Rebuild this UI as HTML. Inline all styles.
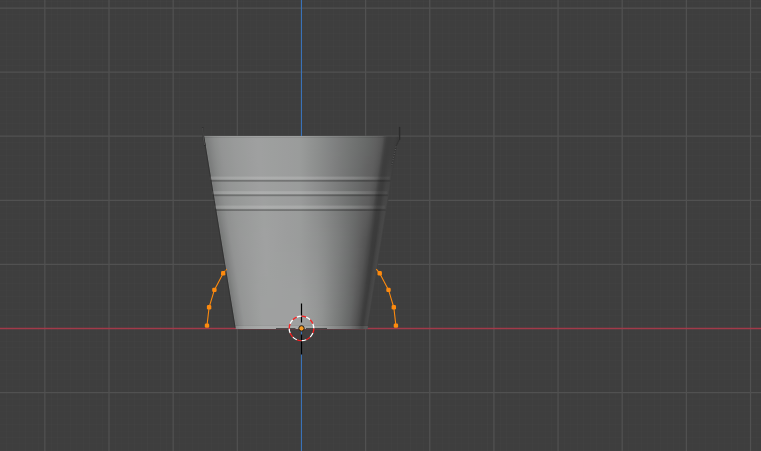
<!DOCTYPE html>
<html><head><meta charset="utf-8"><style>
html,body{margin:0;padding:0;background:#3e3e3e;width:761px;height:451px;overflow:hidden;font-family:"Liberation Sans",sans-serif}
svg{display:block}
</style></head><body>
<svg width="761" height="451" viewBox="0 0 761 451">
<rect width="761" height="451" fill="#3e3e3e"/>

<path d="M0 1.59H761M0 14.41H761M0 20.82H761M-0.05 0V451M0 27.23H761M6.37 0V451M0 33.64H761M12.78 0V451M0 40.05H761M19.20 0V451M0 46.46H761M25.61 0V451M0 52.87H761M32.03 0V451M0 59.28H761M38.44 0V451M0 65.69H761M51.27 0V451M0 78.51H761M57.69 0V451M0 84.92H761M64.10 0V451M0 91.33H761M70.52 0V451M0 97.74H761M76.93 0V451M0 104.15H761M83.35 0V451M0 110.56H761M89.76 0V451M0 116.97H761M96.18 0V451M0 123.38H761M102.59 0V451M0 129.79H761M115.42 0V451M0 142.61H761M121.84 0V451M0 149.02H761M128.25 0V451M0 155.43H761M134.67 0V451M0 161.84H761M141.08 0V451M0 168.25H761M147.50 0V451M0 174.66H761M153.91 0V451M0 181.07H761M160.33 0V451M0 187.48H761M166.74 0V451M0 193.89H761M179.57 0V451M0 206.71H761M185.99 0V451M0 213.12H761M192.40 0V451M0 219.53H761M198.82 0V451M0 225.94H761M205.23 0V451M0 232.35H761M211.65 0V451M0 238.76H761M218.06 0V451M0 245.17H761M224.48 0V451M0 251.58H761M230.89 0V451M0 257.99H761M243.72 0V451M0 270.81H761M250.14 0V451M0 277.22H761M256.55 0V451M0 283.63H761M262.97 0V451M0 290.04H761M269.38 0V451M0 296.45H761M275.80 0V451M0 302.86H761M282.21 0V451M0 309.27H761M288.63 0V451M0 315.68H761M295.04 0V451M0 322.09H761M307.88 0V451M0 334.91H761M314.29 0V451M0 341.32H761M320.70 0V451M0 347.73H761M327.12 0V451M0 354.14H761M333.53 0V451M0 360.55H761M339.95 0V451M0 366.96H761M346.37 0V451M0 373.37H761M352.78 0V451M0 379.78H761M359.19 0V451M0 386.19H761M372.02 0V451M0 399.01H761M378.44 0V451M0 405.42H761M384.86 0V451M0 411.83H761M391.27 0V451M0 418.24H761M397.69 0V451M0 424.65H761M404.10 0V451M0 431.06H761M410.51 0V451M0 437.47H761M416.93 0V451M0 443.88H761M423.35 0V451M0 450.29H761M436.18 0V451M442.59 0V451M449.00 0V451M455.42 0V451M461.84 0V451M468.25 0V451M474.66 0V451M481.08 0V451M487.50 0V451M500.33 0V451M506.74 0V451M513.15 0V451M519.57 0V451M525.99 0V451M532.40 0V451M538.82 0V451M545.23 0V451M551.64 0V451M564.48 0V451M570.89 0V451M577.31 0V451M583.72 0V451M590.13 0V451M596.55 0V451M602.97 0V451M609.38 0V451M615.80 0V451M628.62 0V451M635.04 0V451M641.46 0V451M647.87 0V451M654.29 0V451M660.70 0V451M667.12 0V451M673.53 0V451M679.95 0V451M692.78 0V451M699.19 0V451M705.61 0V451M712.02 0V451M718.44 0V451M724.85 0V451M731.27 0V451M737.68 0V451M744.10 0V451M756.93 0V451" stroke="#ffffff" stroke-opacity="0.015" stroke-width="1" fill="none"/>
<path d="M0 8.00H761M44.86 0V451M0 72.10H761M109.01 0V451M0 136.20H761M173.16 0V451M0 200.30H761M237.31 0V451M0 264.40H761M365.61 0V451M0 392.60H761M429.76 0V451M493.91 0V451M558.06 0V451M622.21 0V451M686.36 0V451M750.51 0V451" stroke="#515151" stroke-width="1.25" fill="none"/>
<path d="M0 328.5H761" stroke="#a23a4a" stroke-width="1.3" fill="none"/>
<path d="M301.46 0V451" stroke="#3a72b8" stroke-width="1.1" fill="none"/>
<defs><linearGradient id="g136"><stop offset="0.010" stop-color="#7c7e7d"/><stop offset="0.020" stop-color="#808282"/><stop offset="0.030" stop-color="#858686"/><stop offset="0.035" stop-color="#878888"/><stop offset="0.050" stop-color="#8c8e8d"/><stop offset="0.055" stop-color="#8d8f8e"/><stop offset="0.060" stop-color="#8e908f"/><stop offset="0.070" stop-color="#919292"/><stop offset="0.076" stop-color="#929493"/><stop offset="0.080" stop-color="#939494"/><stop offset="0.100" stop-color="#959696"/><stop offset="0.120" stop-color="#969897"/><stop offset="0.150" stop-color="#999a9a"/><stop offset="0.200" stop-color="#9b9d9c"/><stop offset="0.210" stop-color="#9c9d9d"/><stop offset="0.270" stop-color="#9fa0a0"/><stop offset="0.280" stop-color="#9fa0a0"/><stop offset="0.350" stop-color="#9d9f9e"/><stop offset="0.420" stop-color="#9c9d9d"/><stop offset="0.490" stop-color="#9a9c9b"/><stop offset="0.550" stop-color="#919392"/><stop offset="0.600" stop-color="#8a8c8b"/><stop offset="0.650" stop-color="#828484"/><stop offset="0.700" stop-color="#7b7c7c"/><stop offset="0.740" stop-color="#757776"/><stop offset="0.790" stop-color="#6e706f"/><stop offset="0.820" stop-color="#6a6c6b"/><stop offset="0.857" stop-color="#646665"/><stop offset="0.886" stop-color="#606060"/><stop offset="0.900" stop-color="#5c5c5c"/><stop offset="0.915" stop-color="#575757"/><stop offset="0.922" stop-color="#525252"/><stop offset="0.925" stop-color="#4e4e4e"/><stop offset="0.927" stop-color="#4b4b4b"/><stop offset="0.930" stop-color="#474747"/><stop offset="0.940" stop-color="#3f3f3f"/><stop offset="0.950" stop-color="#3d3d3d"/><stop offset="0.955" stop-color="#3d3d3d"/><stop offset="0.960" stop-color="#3d3d3d"/><stop offset="0.965" stop-color="#3e3e3e"/><stop offset="0.975" stop-color="#3e3e3e"/><stop offset="0.985" stop-color="#3d3d3d"/><stop offset="0.990" stop-color="#3c3c3c"/><stop offset="1.000" stop-color="#3a3a3a"/></linearGradient><linearGradient id="g140"><stop offset="0.010" stop-color="#7c7e7d"/><stop offset="0.020" stop-color="#808282"/><stop offset="0.030" stop-color="#858686"/><stop offset="0.035" stop-color="#878888"/><stop offset="0.050" stop-color="#8c8e8d"/><stop offset="0.055" stop-color="#8d8f8e"/><stop offset="0.060" stop-color="#8e908f"/><stop offset="0.070" stop-color="#919292"/><stop offset="0.076" stop-color="#929493"/><stop offset="0.080" stop-color="#939494"/><stop offset="0.100" stop-color="#959696"/><stop offset="0.120" stop-color="#969897"/><stop offset="0.150" stop-color="#999a9a"/><stop offset="0.200" stop-color="#9b9d9c"/><stop offset="0.210" stop-color="#9c9d9d"/><stop offset="0.270" stop-color="#9fa0a0"/><stop offset="0.280" stop-color="#9fa0a0"/><stop offset="0.350" stop-color="#9d9f9e"/><stop offset="0.420" stop-color="#9c9d9d"/><stop offset="0.490" stop-color="#9a9c9b"/><stop offset="0.550" stop-color="#919392"/><stop offset="0.600" stop-color="#8a8c8b"/><stop offset="0.650" stop-color="#828484"/><stop offset="0.700" stop-color="#7b7c7c"/><stop offset="0.740" stop-color="#757776"/><stop offset="0.790" stop-color="#6e706f"/><stop offset="0.820" stop-color="#6a6c6b"/><stop offset="0.857" stop-color="#646665"/><stop offset="0.886" stop-color="#606060"/><stop offset="0.900" stop-color="#5c5c5c"/><stop offset="0.915" stop-color="#575757"/><stop offset="0.922" stop-color="#525252"/><stop offset="0.925" stop-color="#4e4e4e"/><stop offset="0.927" stop-color="#4b4b4b"/><stop offset="0.930" stop-color="#474747"/><stop offset="0.940" stop-color="#3f3f3f"/><stop offset="0.950" stop-color="#3d3d3d"/><stop offset="0.955" stop-color="#3d3d3d"/><stop offset="0.960" stop-color="#3d3d3d"/><stop offset="0.965" stop-color="#3e3e3e"/><stop offset="0.975" stop-color="#3e3e3e"/><stop offset="0.985" stop-color="#3d3d3d"/><stop offset="0.990" stop-color="#3c3c3c"/><stop offset="1.000" stop-color="#3a3a3a"/></linearGradient><linearGradient id="g144"><stop offset="0.010" stop-color="#7c7e7d"/><stop offset="0.020" stop-color="#808282"/><stop offset="0.030" stop-color="#858686"/><stop offset="0.035" stop-color="#878888"/><stop offset="0.050" stop-color="#8c8e8d"/><stop offset="0.055" stop-color="#8d8f8e"/><stop offset="0.060" stop-color="#8e908f"/><stop offset="0.070" stop-color="#919292"/><stop offset="0.076" stop-color="#929493"/><stop offset="0.080" stop-color="#939494"/><stop offset="0.100" stop-color="#959696"/><stop offset="0.120" stop-color="#969897"/><stop offset="0.150" stop-color="#999a9a"/><stop offset="0.200" stop-color="#9b9d9c"/><stop offset="0.210" stop-color="#9c9d9d"/><stop offset="0.270" stop-color="#9fa0a0"/><stop offset="0.280" stop-color="#9fa0a0"/><stop offset="0.350" stop-color="#9d9f9e"/><stop offset="0.420" stop-color="#9c9d9d"/><stop offset="0.490" stop-color="#9a9c9b"/><stop offset="0.550" stop-color="#919392"/><stop offset="0.600" stop-color="#8a8c8b"/><stop offset="0.650" stop-color="#828484"/><stop offset="0.700" stop-color="#7b7c7c"/><stop offset="0.740" stop-color="#757776"/><stop offset="0.790" stop-color="#6e706f"/><stop offset="0.820" stop-color="#6a6c6b"/><stop offset="0.857" stop-color="#646665"/><stop offset="0.886" stop-color="#606060"/><stop offset="0.900" stop-color="#5c5c5c"/><stop offset="0.915" stop-color="#575757"/><stop offset="0.922" stop-color="#525252"/><stop offset="0.925" stop-color="#4e4e4e"/><stop offset="0.927" stop-color="#4b4b4b"/><stop offset="0.930" stop-color="#474747"/><stop offset="0.940" stop-color="#3f3f3f"/><stop offset="0.950" stop-color="#3d3d3d"/><stop offset="0.955" stop-color="#3d3d3d"/><stop offset="0.960" stop-color="#3d3d3d"/><stop offset="0.965" stop-color="#3e3e3e"/><stop offset="0.975" stop-color="#3e3e3e"/><stop offset="0.985" stop-color="#3d3d3d"/><stop offset="0.990" stop-color="#3c3c3c"/><stop offset="1.000" stop-color="#3a3a3a"/></linearGradient><linearGradient id="g148"><stop offset="0.010" stop-color="#7c7e7d"/><stop offset="0.020" stop-color="#808282"/><stop offset="0.030" stop-color="#858686"/><stop offset="0.035" stop-color="#878888"/><stop offset="0.050" stop-color="#8c8e8d"/><stop offset="0.055" stop-color="#8d8f8e"/><stop offset="0.060" stop-color="#8e908f"/><stop offset="0.070" stop-color="#919292"/><stop offset="0.076" stop-color="#929493"/><stop offset="0.080" stop-color="#939494"/><stop offset="0.100" stop-color="#959696"/><stop offset="0.120" stop-color="#969897"/><stop offset="0.150" stop-color="#999a9a"/><stop offset="0.200" stop-color="#9b9d9c"/><stop offset="0.210" stop-color="#9c9d9d"/><stop offset="0.270" stop-color="#9fa0a0"/><stop offset="0.280" stop-color="#9fa0a0"/><stop offset="0.350" stop-color="#9d9f9e"/><stop offset="0.420" stop-color="#9c9d9d"/><stop offset="0.490" stop-color="#9a9c9b"/><stop offset="0.550" stop-color="#919392"/><stop offset="0.600" stop-color="#8a8c8b"/><stop offset="0.650" stop-color="#828484"/><stop offset="0.700" stop-color="#7b7c7c"/><stop offset="0.740" stop-color="#757776"/><stop offset="0.790" stop-color="#6e706f"/><stop offset="0.820" stop-color="#6a6c6b"/><stop offset="0.857" stop-color="#646665"/><stop offset="0.886" stop-color="#606060"/><stop offset="0.900" stop-color="#5c5c5c"/><stop offset="0.915" stop-color="#575757"/><stop offset="0.922" stop-color="#525252"/><stop offset="0.925" stop-color="#4e4e4e"/><stop offset="0.927" stop-color="#4b4b4b"/><stop offset="0.930" stop-color="#474747"/><stop offset="0.940" stop-color="#3f3f3f"/><stop offset="0.950" stop-color="#3d3d3d"/><stop offset="0.955" stop-color="#3d3d3d"/><stop offset="0.960" stop-color="#3d3d3d"/><stop offset="0.965" stop-color="#3e3e3e"/><stop offset="0.975" stop-color="#3e3e3e"/><stop offset="0.985" stop-color="#3d3d3d"/><stop offset="0.990" stop-color="#3c3c3c"/><stop offset="1.000" stop-color="#3a3a3a"/></linearGradient><linearGradient id="g152"><stop offset="0.010" stop-color="#7c7e7d"/><stop offset="0.020" stop-color="#818282"/><stop offset="0.030" stop-color="#858786"/><stop offset="0.035" stop-color="#878888"/><stop offset="0.050" stop-color="#8c8e8d"/><stop offset="0.055" stop-color="#8d8f8e"/><stop offset="0.060" stop-color="#8e908f"/><stop offset="0.070" stop-color="#919292"/><stop offset="0.076" stop-color="#929493"/><stop offset="0.080" stop-color="#939494"/><stop offset="0.100" stop-color="#959696"/><stop offset="0.120" stop-color="#969897"/><stop offset="0.150" stop-color="#999a9a"/><stop offset="0.200" stop-color="#9b9d9c"/><stop offset="0.210" stop-color="#9c9d9d"/><stop offset="0.270" stop-color="#9fa0a0"/><stop offset="0.280" stop-color="#9fa0a0"/><stop offset="0.350" stop-color="#9d9f9e"/><stop offset="0.420" stop-color="#9c9d9d"/><stop offset="0.490" stop-color="#9a9c9b"/><stop offset="0.550" stop-color="#919392"/><stop offset="0.600" stop-color="#8a8c8b"/><stop offset="0.650" stop-color="#838484"/><stop offset="0.700" stop-color="#7b7d7c"/><stop offset="0.740" stop-color="#757776"/><stop offset="0.790" stop-color="#6e706f"/><stop offset="0.820" stop-color="#6a6b6b"/><stop offset="0.857" stop-color="#646665"/><stop offset="0.886" stop-color="#606060"/><stop offset="0.900" stop-color="#5c5c5c"/><stop offset="0.915" stop-color="#565656"/><stop offset="0.922" stop-color="#515151"/><stop offset="0.925" stop-color="#4d4d4d"/><stop offset="0.927" stop-color="#4b4b4b"/><stop offset="0.930" stop-color="#474747"/><stop offset="0.940" stop-color="#3f3f3f"/><stop offset="0.950" stop-color="#3d3d3d"/><stop offset="0.955" stop-color="#3d3d3d"/><stop offset="0.960" stop-color="#3d3d3d"/><stop offset="0.965" stop-color="#3e3e3e"/><stop offset="0.975" stop-color="#3e3e3e"/><stop offset="0.985" stop-color="#3e3e3e"/><stop offset="0.990" stop-color="#3d3d3d"/><stop offset="1.000" stop-color="#3a3a3a"/></linearGradient><linearGradient id="g156"><stop offset="0.010" stop-color="#7c7e7d"/><stop offset="0.020" stop-color="#818282"/><stop offset="0.030" stop-color="#858786"/><stop offset="0.035" stop-color="#878888"/><stop offset="0.050" stop-color="#8c8e8d"/><stop offset="0.055" stop-color="#8d8f8e"/><stop offset="0.060" stop-color="#8e908f"/><stop offset="0.070" stop-color="#919292"/><stop offset="0.076" stop-color="#929393"/><stop offset="0.080" stop-color="#939494"/><stop offset="0.100" stop-color="#959696"/><stop offset="0.120" stop-color="#969897"/><stop offset="0.150" stop-color="#999a9a"/><stop offset="0.200" stop-color="#9b9d9c"/><stop offset="0.210" stop-color="#9c9d9d"/><stop offset="0.270" stop-color="#9fa0a0"/><stop offset="0.280" stop-color="#9fa0a0"/><stop offset="0.350" stop-color="#9d9f9e"/><stop offset="0.420" stop-color="#9c9d9d"/><stop offset="0.490" stop-color="#9a9c9b"/><stop offset="0.550" stop-color="#919392"/><stop offset="0.600" stop-color="#8a8c8b"/><stop offset="0.650" stop-color="#838484"/><stop offset="0.700" stop-color="#7b7c7c"/><stop offset="0.740" stop-color="#757776"/><stop offset="0.790" stop-color="#6e6f6f"/><stop offset="0.820" stop-color="#6a6b6b"/><stop offset="0.857" stop-color="#646464"/><stop offset="0.886" stop-color="#606060"/><stop offset="0.900" stop-color="#5c5c5c"/><stop offset="0.915" stop-color="#565656"/><stop offset="0.922" stop-color="#515151"/><stop offset="0.925" stop-color="#4d4d4d"/><stop offset="0.927" stop-color="#4a4a4a"/><stop offset="0.930" stop-color="#464646"/><stop offset="0.940" stop-color="#3f3f3f"/><stop offset="0.950" stop-color="#3d3d3d"/><stop offset="0.955" stop-color="#3d3d3d"/><stop offset="0.960" stop-color="#3e3e3e"/><stop offset="0.965" stop-color="#3e3e3e"/><stop offset="0.975" stop-color="#3f3f3f"/><stop offset="0.985" stop-color="#3f3f3f"/><stop offset="0.990" stop-color="#3e3e3e"/><stop offset="1.000" stop-color="#3b3b3b"/></linearGradient><linearGradient id="g160"><stop offset="0.010" stop-color="#7c7e7d"/><stop offset="0.020" stop-color="#818282"/><stop offset="0.030" stop-color="#858786"/><stop offset="0.035" stop-color="#878888"/><stop offset="0.050" stop-color="#8c8e8d"/><stop offset="0.055" stop-color="#8d8f8e"/><stop offset="0.060" stop-color="#8e908f"/><stop offset="0.070" stop-color="#919292"/><stop offset="0.076" stop-color="#929393"/><stop offset="0.080" stop-color="#939494"/><stop offset="0.100" stop-color="#959696"/><stop offset="0.120" stop-color="#969897"/><stop offset="0.150" stop-color="#999a9a"/><stop offset="0.200" stop-color="#9b9d9c"/><stop offset="0.210" stop-color="#9c9d9d"/><stop offset="0.270" stop-color="#9fa0a0"/><stop offset="0.280" stop-color="#9fa0a0"/><stop offset="0.350" stop-color="#9d9f9e"/><stop offset="0.420" stop-color="#9c9d9d"/><stop offset="0.490" stop-color="#9a9c9b"/><stop offset="0.550" stop-color="#919392"/><stop offset="0.600" stop-color="#8a8c8b"/><stop offset="0.650" stop-color="#838484"/><stop offset="0.700" stop-color="#7b7c7c"/><stop offset="0.740" stop-color="#757776"/><stop offset="0.790" stop-color="#6e6f6f"/><stop offset="0.820" stop-color="#696b6a"/><stop offset="0.857" stop-color="#646464"/><stop offset="0.886" stop-color="#5f5f5f"/><stop offset="0.900" stop-color="#5b5b5b"/><stop offset="0.915" stop-color="#555555"/><stop offset="0.922" stop-color="#505050"/><stop offset="0.925" stop-color="#4c4c4c"/><stop offset="0.927" stop-color="#494949"/><stop offset="0.930" stop-color="#464646"/><stop offset="0.940" stop-color="#3e3e3e"/><stop offset="0.950" stop-color="#3d3d3d"/><stop offset="0.955" stop-color="#3d3d3d"/><stop offset="0.960" stop-color="#3e3e3e"/><stop offset="0.965" stop-color="#3e3e3e"/><stop offset="0.975" stop-color="#404040"/><stop offset="0.985" stop-color="#3f3f3f"/><stop offset="0.990" stop-color="#3f3f3f"/><stop offset="1.000" stop-color="#3b3b3b"/></linearGradient><linearGradient id="g164"><stop offset="0.010" stop-color="#7c7e7d"/><stop offset="0.020" stop-color="#818282"/><stop offset="0.030" stop-color="#858786"/><stop offset="0.035" stop-color="#878988"/><stop offset="0.050" stop-color="#8c8e8d"/><stop offset="0.055" stop-color="#8d8f8e"/><stop offset="0.060" stop-color="#8e908f"/><stop offset="0.070" stop-color="#919292"/><stop offset="0.076" stop-color="#929393"/><stop offset="0.080" stop-color="#939494"/><stop offset="0.100" stop-color="#959696"/><stop offset="0.120" stop-color="#969897"/><stop offset="0.150" stop-color="#999a9a"/><stop offset="0.200" stop-color="#9b9d9c"/><stop offset="0.210" stop-color="#9c9d9d"/><stop offset="0.270" stop-color="#9fa0a0"/><stop offset="0.280" stop-color="#9fa0a0"/><stop offset="0.350" stop-color="#9d9f9e"/><stop offset="0.420" stop-color="#9c9d9d"/><stop offset="0.490" stop-color="#9a9c9b"/><stop offset="0.550" stop-color="#919392"/><stop offset="0.600" stop-color="#8a8c8b"/><stop offset="0.650" stop-color="#838484"/><stop offset="0.700" stop-color="#7b7c7c"/><stop offset="0.740" stop-color="#757776"/><stop offset="0.790" stop-color="#6e6f6f"/><stop offset="0.820" stop-color="#696b6a"/><stop offset="0.857" stop-color="#636363"/><stop offset="0.886" stop-color="#5f5f5f"/><stop offset="0.900" stop-color="#5b5b5b"/><stop offset="0.915" stop-color="#555555"/><stop offset="0.922" stop-color="#4f4f4f"/><stop offset="0.925" stop-color="#4b4b4b"/><stop offset="0.927" stop-color="#494949"/><stop offset="0.930" stop-color="#454545"/><stop offset="0.940" stop-color="#3e3e3e"/><stop offset="0.950" stop-color="#3d3d3d"/><stop offset="0.955" stop-color="#3d3d3d"/><stop offset="0.960" stop-color="#3e3e3e"/><stop offset="0.965" stop-color="#3f3f3f"/><stop offset="0.975" stop-color="#404040"/><stop offset="0.985" stop-color="#404040"/><stop offset="0.990" stop-color="#404040"/><stop offset="1.000" stop-color="#3b3b3b"/></linearGradient><linearGradient id="g168"><stop offset="0.010" stop-color="#7c7e7d"/><stop offset="0.020" stop-color="#818282"/><stop offset="0.030" stop-color="#858786"/><stop offset="0.035" stop-color="#878988"/><stop offset="0.050" stop-color="#8c8e8d"/><stop offset="0.055" stop-color="#8e8f8e"/><stop offset="0.060" stop-color="#8f9090"/><stop offset="0.070" stop-color="#919292"/><stop offset="0.076" stop-color="#929393"/><stop offset="0.080" stop-color="#939494"/><stop offset="0.100" stop-color="#959696"/><stop offset="0.120" stop-color="#969897"/><stop offset="0.150" stop-color="#999a9a"/><stop offset="0.200" stop-color="#9b9d9c"/><stop offset="0.210" stop-color="#9c9d9d"/><stop offset="0.270" stop-color="#9fa0a0"/><stop offset="0.280" stop-color="#9fa0a0"/><stop offset="0.350" stop-color="#9d9f9e"/><stop offset="0.420" stop-color="#9c9d9d"/><stop offset="0.490" stop-color="#9a9c9b"/><stop offset="0.550" stop-color="#919392"/><stop offset="0.600" stop-color="#8a8c8b"/><stop offset="0.650" stop-color="#838484"/><stop offset="0.700" stop-color="#7b7c7c"/><stop offset="0.740" stop-color="#757676"/><stop offset="0.790" stop-color="#6d6f6e"/><stop offset="0.820" stop-color="#696a6a"/><stop offset="0.857" stop-color="#636363"/><stop offset="0.886" stop-color="#5f5f5f"/><stop offset="0.900" stop-color="#5b5b5b"/><stop offset="0.915" stop-color="#545454"/><stop offset="0.922" stop-color="#4f4f4f"/><stop offset="0.925" stop-color="#4b4b4b"/><stop offset="0.927" stop-color="#484848"/><stop offset="0.930" stop-color="#454545"/><stop offset="0.940" stop-color="#3e3e3e"/><stop offset="0.950" stop-color="#3d3d3d"/><stop offset="0.955" stop-color="#3d3d3d"/><stop offset="0.960" stop-color="#3e3e3e"/><stop offset="0.965" stop-color="#3f3f3f"/><stop offset="0.975" stop-color="#414141"/><stop offset="0.985" stop-color="#414141"/><stop offset="0.990" stop-color="#414141"/><stop offset="1.000" stop-color="#3c3c3c"/></linearGradient><linearGradient id="g172"><stop offset="0.010" stop-color="#7c7e7d"/><stop offset="0.020" stop-color="#818282"/><stop offset="0.030" stop-color="#858786"/><stop offset="0.035" stop-color="#878988"/><stop offset="0.050" stop-color="#8c8e8d"/><stop offset="0.055" stop-color="#8e8f8f"/><stop offset="0.060" stop-color="#8f9090"/><stop offset="0.070" stop-color="#919292"/><stop offset="0.076" stop-color="#929393"/><stop offset="0.080" stop-color="#929493"/><stop offset="0.100" stop-color="#959696"/><stop offset="0.120" stop-color="#969897"/><stop offset="0.150" stop-color="#999a9a"/><stop offset="0.200" stop-color="#9b9d9c"/><stop offset="0.210" stop-color="#9c9d9d"/><stop offset="0.270" stop-color="#9fa0a0"/><stop offset="0.280" stop-color="#9fa0a0"/><stop offset="0.350" stop-color="#9d9f9e"/><stop offset="0.420" stop-color="#9c9d9d"/><stop offset="0.490" stop-color="#9a9c9b"/><stop offset="0.550" stop-color="#929393"/><stop offset="0.600" stop-color="#8a8c8b"/><stop offset="0.650" stop-color="#838484"/><stop offset="0.700" stop-color="#7b7c7c"/><stop offset="0.740" stop-color="#757676"/><stop offset="0.790" stop-color="#6d6f6e"/><stop offset="0.820" stop-color="#696a6a"/><stop offset="0.857" stop-color="#636363"/><stop offset="0.886" stop-color="#5f5f5f"/><stop offset="0.900" stop-color="#5a5a5a"/><stop offset="0.915" stop-color="#545454"/><stop offset="0.922" stop-color="#4e4e4e"/><stop offset="0.925" stop-color="#4a4a4a"/><stop offset="0.927" stop-color="#484848"/><stop offset="0.930" stop-color="#454545"/><stop offset="0.940" stop-color="#3e3e3e"/><stop offset="0.950" stop-color="#3d3d3d"/><stop offset="0.955" stop-color="#3d3d3d"/><stop offset="0.960" stop-color="#3e3e3e"/><stop offset="0.965" stop-color="#3f3f3f"/><stop offset="0.975" stop-color="#424242"/><stop offset="0.985" stop-color="#424242"/><stop offset="0.990" stop-color="#424242"/><stop offset="1.000" stop-color="#3c3c3c"/></linearGradient><linearGradient id="g176"><stop offset="0.010" stop-color="#7d7e7e"/><stop offset="0.020" stop-color="#818382"/><stop offset="0.030" stop-color="#868787"/><stop offset="0.035" stop-color="#878988"/><stop offset="0.050" stop-color="#8c8e8d"/><stop offset="0.055" stop-color="#8e8f8f"/><stop offset="0.060" stop-color="#8f9090"/><stop offset="0.070" stop-color="#909291"/><stop offset="0.076" stop-color="#929393"/><stop offset="0.080" stop-color="#929493"/><stop offset="0.100" stop-color="#959696"/><stop offset="0.120" stop-color="#969897"/><stop offset="0.150" stop-color="#989a99"/><stop offset="0.200" stop-color="#9b9d9c"/><stop offset="0.210" stop-color="#9c9d9d"/><stop offset="0.270" stop-color="#9fa0a0"/><stop offset="0.280" stop-color="#9fa0a0"/><stop offset="0.350" stop-color="#9d9f9e"/><stop offset="0.420" stop-color="#9c9d9d"/><stop offset="0.490" stop-color="#9a9c9b"/><stop offset="0.550" stop-color="#929393"/><stop offset="0.600" stop-color="#8b8c8c"/><stop offset="0.650" stop-color="#838484"/><stop offset="0.700" stop-color="#7b7c7c"/><stop offset="0.740" stop-color="#757676"/><stop offset="0.790" stop-color="#6d6e6e"/><stop offset="0.820" stop-color="#686a69"/><stop offset="0.857" stop-color="#636363"/><stop offset="0.886" stop-color="#5e5e5e"/><stop offset="0.900" stop-color="#5a5a5a"/><stop offset="0.915" stop-color="#535353"/><stop offset="0.922" stop-color="#4d4d4d"/><stop offset="0.925" stop-color="#4a4a4a"/><stop offset="0.927" stop-color="#474747"/><stop offset="0.930" stop-color="#444444"/><stop offset="0.940" stop-color="#3d3d3d"/><stop offset="0.950" stop-color="#3c3c3c"/><stop offset="0.955" stop-color="#3d3d3d"/><stop offset="0.960" stop-color="#3e3e3e"/><stop offset="0.965" stop-color="#3f3f3f"/><stop offset="0.975" stop-color="#424242"/><stop offset="0.985" stop-color="#434343"/><stop offset="0.990" stop-color="#434343"/><stop offset="1.000" stop-color="#3c3c3c"/></linearGradient><linearGradient id="g180"><stop offset="0.010" stop-color="#7d7e7e"/><stop offset="0.020" stop-color="#818382"/><stop offset="0.030" stop-color="#868787"/><stop offset="0.035" stop-color="#878988"/><stop offset="0.050" stop-color="#8c8e8d"/><stop offset="0.055" stop-color="#8e8f8f"/><stop offset="0.060" stop-color="#8f9090"/><stop offset="0.070" stop-color="#909291"/><stop offset="0.076" stop-color="#929393"/><stop offset="0.080" stop-color="#929493"/><stop offset="0.100" stop-color="#959696"/><stop offset="0.120" stop-color="#969897"/><stop offset="0.150" stop-color="#989a99"/><stop offset="0.200" stop-color="#9b9d9c"/><stop offset="0.210" stop-color="#9c9d9d"/><stop offset="0.270" stop-color="#9fa0a0"/><stop offset="0.280" stop-color="#9fa0a0"/><stop offset="0.350" stop-color="#9d9f9e"/><stop offset="0.420" stop-color="#9c9d9d"/><stop offset="0.490" stop-color="#9a9c9b"/><stop offset="0.550" stop-color="#929393"/><stop offset="0.600" stop-color="#8b8c8c"/><stop offset="0.650" stop-color="#838484"/><stop offset="0.700" stop-color="#7b7c7c"/><stop offset="0.740" stop-color="#757676"/><stop offset="0.790" stop-color="#6d6e6e"/><stop offset="0.820" stop-color="#686a69"/><stop offset="0.857" stop-color="#626262"/><stop offset="0.886" stop-color="#5e5e5e"/><stop offset="0.900" stop-color="#5a5a5a"/><stop offset="0.915" stop-color="#535353"/><stop offset="0.922" stop-color="#4c4c4c"/><stop offset="0.925" stop-color="#494949"/><stop offset="0.927" stop-color="#474747"/><stop offset="0.930" stop-color="#444444"/><stop offset="0.940" stop-color="#3d3d3d"/><stop offset="0.950" stop-color="#3c3c3c"/><stop offset="0.955" stop-color="#3c3c3c"/><stop offset="0.960" stop-color="#3e3e3e"/><stop offset="0.965" stop-color="#404040"/><stop offset="0.975" stop-color="#434343"/><stop offset="0.985" stop-color="#444444"/><stop offset="0.990" stop-color="#444444"/><stop offset="1.000" stop-color="#3d3d3d"/></linearGradient><linearGradient id="g184"><stop offset="0.010" stop-color="#7d7e7e"/><stop offset="0.020" stop-color="#818382"/><stop offset="0.030" stop-color="#868787"/><stop offset="0.035" stop-color="#878988"/><stop offset="0.050" stop-color="#8c8e8d"/><stop offset="0.055" stop-color="#8e8f8f"/><stop offset="0.060" stop-color="#8f9090"/><stop offset="0.070" stop-color="#909291"/><stop offset="0.076" stop-color="#919392"/><stop offset="0.080" stop-color="#929493"/><stop offset="0.100" stop-color="#959696"/><stop offset="0.120" stop-color="#969897"/><stop offset="0.150" stop-color="#989a99"/><stop offset="0.200" stop-color="#9b9d9c"/><stop offset="0.210" stop-color="#9c9d9d"/><stop offset="0.270" stop-color="#9fa0a0"/><stop offset="0.280" stop-color="#9fa0a0"/><stop offset="0.350" stop-color="#9d9f9e"/><stop offset="0.420" stop-color="#9c9d9d"/><stop offset="0.490" stop-color="#9a9c9b"/><stop offset="0.550" stop-color="#929393"/><stop offset="0.600" stop-color="#8b8c8c"/><stop offset="0.650" stop-color="#838484"/><stop offset="0.700" stop-color="#7b7c7c"/><stop offset="0.740" stop-color="#757676"/><stop offset="0.790" stop-color="#6d6e6e"/><stop offset="0.820" stop-color="#686969"/><stop offset="0.857" stop-color="#626262"/><stop offset="0.886" stop-color="#5e5e5e"/><stop offset="0.900" stop-color="#595959"/><stop offset="0.915" stop-color="#535353"/><stop offset="0.922" stop-color="#4c4c4c"/><stop offset="0.925" stop-color="#484848"/><stop offset="0.927" stop-color="#464646"/><stop offset="0.930" stop-color="#434343"/><stop offset="0.940" stop-color="#3d3d3d"/><stop offset="0.950" stop-color="#3c3c3c"/><stop offset="0.955" stop-color="#3c3c3c"/><stop offset="0.960" stop-color="#3e3e3e"/><stop offset="0.965" stop-color="#404040"/><stop offset="0.975" stop-color="#444444"/><stop offset="0.985" stop-color="#444444"/><stop offset="0.990" stop-color="#454545"/><stop offset="1.000" stop-color="#3d3d3d"/></linearGradient><linearGradient id="g188"><stop offset="0.010" stop-color="#7d7e7e"/><stop offset="0.020" stop-color="#818382"/><stop offset="0.030" stop-color="#868787"/><stop offset="0.035" stop-color="#878988"/><stop offset="0.050" stop-color="#8c8e8d"/><stop offset="0.055" stop-color="#8e8f8f"/><stop offset="0.060" stop-color="#8f9090"/><stop offset="0.070" stop-color="#909291"/><stop offset="0.076" stop-color="#919392"/><stop offset="0.080" stop-color="#929493"/><stop offset="0.100" stop-color="#959696"/><stop offset="0.120" stop-color="#969897"/><stop offset="0.150" stop-color="#989a99"/><stop offset="0.200" stop-color="#9b9d9c"/><stop offset="0.210" stop-color="#9c9d9d"/><stop offset="0.270" stop-color="#9fa0a0"/><stop offset="0.280" stop-color="#9fa0a0"/><stop offset="0.350" stop-color="#9d9f9e"/><stop offset="0.420" stop-color="#9c9d9d"/><stop offset="0.490" stop-color="#9a9c9b"/><stop offset="0.550" stop-color="#929393"/><stop offset="0.600" stop-color="#8b8c8c"/><stop offset="0.650" stop-color="#838484"/><stop offset="0.700" stop-color="#7b7c7c"/><stop offset="0.740" stop-color="#747675"/><stop offset="0.790" stop-color="#6c6e6d"/><stop offset="0.820" stop-color="#686969"/><stop offset="0.857" stop-color="#626262"/><stop offset="0.886" stop-color="#5e5e5e"/><stop offset="0.900" stop-color="#595959"/><stop offset="0.915" stop-color="#525252"/><stop offset="0.922" stop-color="#4b4b4b"/><stop offset="0.925" stop-color="#484848"/><stop offset="0.927" stop-color="#454545"/><stop offset="0.930" stop-color="#434343"/><stop offset="0.940" stop-color="#3d3d3d"/><stop offset="0.950" stop-color="#3c3c3c"/><stop offset="0.955" stop-color="#3c3c3c"/><stop offset="0.960" stop-color="#3e3e3e"/><stop offset="0.965" stop-color="#404040"/><stop offset="0.975" stop-color="#444444"/><stop offset="0.985" stop-color="#454545"/><stop offset="0.990" stop-color="#464646"/><stop offset="1.000" stop-color="#3d3d3d"/></linearGradient><linearGradient id="g192"><stop offset="0.010" stop-color="#7d7e7e"/><stop offset="0.020" stop-color="#818382"/><stop offset="0.030" stop-color="#868787"/><stop offset="0.035" stop-color="#878988"/><stop offset="0.050" stop-color="#8c8e8d"/><stop offset="0.055" stop-color="#8e8f8f"/><stop offset="0.060" stop-color="#8f9090"/><stop offset="0.070" stop-color="#909291"/><stop offset="0.076" stop-color="#919392"/><stop offset="0.080" stop-color="#929493"/><stop offset="0.100" stop-color="#959696"/><stop offset="0.120" stop-color="#969897"/><stop offset="0.150" stop-color="#989a99"/><stop offset="0.200" stop-color="#9b9d9c"/><stop offset="0.210" stop-color="#9c9d9d"/><stop offset="0.270" stop-color="#9fa0a0"/><stop offset="0.280" stop-color="#9fa0a0"/><stop offset="0.350" stop-color="#9d9f9e"/><stop offset="0.420" stop-color="#9c9d9d"/><stop offset="0.490" stop-color="#9a9c9b"/><stop offset="0.550" stop-color="#929393"/><stop offset="0.600" stop-color="#8b8c8c"/><stop offset="0.650" stop-color="#838484"/><stop offset="0.700" stop-color="#7b7c7c"/><stop offset="0.740" stop-color="#747675"/><stop offset="0.790" stop-color="#6c6e6d"/><stop offset="0.820" stop-color="#676968"/><stop offset="0.857" stop-color="#626262"/><stop offset="0.886" stop-color="#5d5d5d"/><stop offset="0.900" stop-color="#595959"/><stop offset="0.915" stop-color="#525252"/><stop offset="0.922" stop-color="#4a4a4a"/><stop offset="0.925" stop-color="#474747"/><stop offset="0.927" stop-color="#454545"/><stop offset="0.930" stop-color="#434343"/><stop offset="0.940" stop-color="#3c3c3c"/><stop offset="0.950" stop-color="#3c3c3c"/><stop offset="0.955" stop-color="#3c3c3c"/><stop offset="0.960" stop-color="#3e3e3e"/><stop offset="0.965" stop-color="#414141"/><stop offset="0.975" stop-color="#454545"/><stop offset="0.985" stop-color="#464646"/><stop offset="0.990" stop-color="#474747"/><stop offset="1.000" stop-color="#3e3e3e"/></linearGradient><linearGradient id="g196"><stop offset="0.010" stop-color="#7d7e7e"/><stop offset="0.020" stop-color="#818382"/><stop offset="0.030" stop-color="#868787"/><stop offset="0.035" stop-color="#888989"/><stop offset="0.050" stop-color="#8c8e8d"/><stop offset="0.055" stop-color="#8e8f8f"/><stop offset="0.060" stop-color="#8f9090"/><stop offset="0.070" stop-color="#909291"/><stop offset="0.076" stop-color="#919392"/><stop offset="0.080" stop-color="#929393"/><stop offset="0.100" stop-color="#959696"/><stop offset="0.120" stop-color="#969897"/><stop offset="0.150" stop-color="#989a99"/><stop offset="0.200" stop-color="#9b9d9c"/><stop offset="0.210" stop-color="#9c9d9d"/><stop offset="0.270" stop-color="#9fa0a0"/><stop offset="0.280" stop-color="#9fa0a0"/><stop offset="0.350" stop-color="#9d9f9e"/><stop offset="0.420" stop-color="#9c9d9d"/><stop offset="0.490" stop-color="#9a9c9b"/><stop offset="0.550" stop-color="#929393"/><stop offset="0.600" stop-color="#8b8c8c"/><stop offset="0.650" stop-color="#838484"/><stop offset="0.700" stop-color="#7b7c7c"/><stop offset="0.740" stop-color="#747675"/><stop offset="0.790" stop-color="#6c6d6d"/><stop offset="0.820" stop-color="#676968"/><stop offset="0.857" stop-color="#626262"/><stop offset="0.886" stop-color="#5d5d5d"/><stop offset="0.900" stop-color="#585858"/><stop offset="0.915" stop-color="#515151"/><stop offset="0.922" stop-color="#4a4a4a"/><stop offset="0.925" stop-color="#464646"/><stop offset="0.927" stop-color="#444444"/><stop offset="0.930" stop-color="#424242"/><stop offset="0.940" stop-color="#3c3c3c"/><stop offset="0.950" stop-color="#3c3c3c"/><stop offset="0.955" stop-color="#3c3c3c"/><stop offset="0.960" stop-color="#3e3e3e"/><stop offset="0.965" stop-color="#414141"/><stop offset="0.975" stop-color="#464646"/><stop offset="0.985" stop-color="#474747"/><stop offset="0.990" stop-color="#484848"/><stop offset="1.000" stop-color="#3e3e3e"/></linearGradient><linearGradient id="g200"><stop offset="0.010" stop-color="#7d7e7e"/><stop offset="0.020" stop-color="#818382"/><stop offset="0.030" stop-color="#868787"/><stop offset="0.035" stop-color="#888989"/><stop offset="0.050" stop-color="#8c8e8d"/><stop offset="0.055" stop-color="#8e908f"/><stop offset="0.060" stop-color="#8f9090"/><stop offset="0.070" stop-color="#909291"/><stop offset="0.076" stop-color="#919392"/><stop offset="0.080" stop-color="#929393"/><stop offset="0.100" stop-color="#959796"/><stop offset="0.120" stop-color="#969897"/><stop offset="0.150" stop-color="#989a99"/><stop offset="0.200" stop-color="#9b9d9c"/><stop offset="0.210" stop-color="#9c9d9d"/><stop offset="0.270" stop-color="#9fa0a0"/><stop offset="0.280" stop-color="#9fa1a0"/><stop offset="0.350" stop-color="#9d9f9e"/><stop offset="0.420" stop-color="#9c9d9d"/><stop offset="0.490" stop-color="#9a9b9b"/><stop offset="0.550" stop-color="#929393"/><stop offset="0.600" stop-color="#8b8d8c"/><stop offset="0.650" stop-color="#838584"/><stop offset="0.700" stop-color="#7b7d7c"/><stop offset="0.740" stop-color="#757676"/><stop offset="0.790" stop-color="#6c6e6d"/><stop offset="0.820" stop-color="#676968"/><stop offset="0.857" stop-color="#616161"/><stop offset="0.886" stop-color="#5d5d5d"/><stop offset="0.900" stop-color="#585858"/><stop offset="0.915" stop-color="#515151"/><stop offset="0.922" stop-color="#494949"/><stop offset="0.925" stop-color="#464646"/><stop offset="0.927" stop-color="#444444"/><stop offset="0.930" stop-color="#424242"/><stop offset="0.940" stop-color="#3c3c3c"/><stop offset="0.950" stop-color="#3c3c3c"/><stop offset="0.955" stop-color="#3c3c3c"/><stop offset="0.960" stop-color="#3e3e3e"/><stop offset="0.965" stop-color="#414141"/><stop offset="0.975" stop-color="#464646"/><stop offset="0.985" stop-color="#474747"/><stop offset="0.990" stop-color="#484848"/><stop offset="1.000" stop-color="#3e3e3e"/></linearGradient><linearGradient id="g204"><stop offset="0.010" stop-color="#7d7e7e"/><stop offset="0.020" stop-color="#818382"/><stop offset="0.030" stop-color="#868787"/><stop offset="0.035" stop-color="#878988"/><stop offset="0.050" stop-color="#8c8e8d"/><stop offset="0.055" stop-color="#8e908f"/><stop offset="0.060" stop-color="#8f9190"/><stop offset="0.070" stop-color="#919292"/><stop offset="0.076" stop-color="#929393"/><stop offset="0.080" stop-color="#929493"/><stop offset="0.100" stop-color="#959796"/><stop offset="0.120" stop-color="#969897"/><stop offset="0.150" stop-color="#989a99"/><stop offset="0.200" stop-color="#9b9d9c"/><stop offset="0.210" stop-color="#9c9d9d"/><stop offset="0.270" stop-color="#9fa0a0"/><stop offset="0.280" stop-color="#9fa1a0"/><stop offset="0.350" stop-color="#9d9f9e"/><stop offset="0.420" stop-color="#9c9d9d"/><stop offset="0.490" stop-color="#9a9c9b"/><stop offset="0.550" stop-color="#929493"/><stop offset="0.600" stop-color="#8c8d8d"/><stop offset="0.650" stop-color="#848585"/><stop offset="0.700" stop-color="#7c7d7d"/><stop offset="0.740" stop-color="#757776"/><stop offset="0.790" stop-color="#6c6e6d"/><stop offset="0.820" stop-color="#676968"/><stop offset="0.857" stop-color="#616161"/><stop offset="0.886" stop-color="#5c5c5c"/><stop offset="0.900" stop-color="#585858"/><stop offset="0.915" stop-color="#505050"/><stop offset="0.922" stop-color="#494949"/><stop offset="0.925" stop-color="#464646"/><stop offset="0.927" stop-color="#444444"/><stop offset="0.930" stop-color="#424242"/><stop offset="0.940" stop-color="#3c3c3c"/><stop offset="0.950" stop-color="#3c3c3c"/><stop offset="0.955" stop-color="#3c3c3c"/><stop offset="0.960" stop-color="#3e3e3e"/><stop offset="0.965" stop-color="#404040"/><stop offset="0.975" stop-color="#464646"/><stop offset="0.985" stop-color="#474747"/><stop offset="0.990" stop-color="#484848"/><stop offset="1.000" stop-color="#3e3e3e"/></linearGradient><linearGradient id="g208"><stop offset="0.010" stop-color="#7c7e7d"/><stop offset="0.020" stop-color="#818282"/><stop offset="0.030" stop-color="#868786"/><stop offset="0.035" stop-color="#878988"/><stop offset="0.050" stop-color="#8c8e8d"/><stop offset="0.055" stop-color="#8e908f"/><stop offset="0.060" stop-color="#8f9190"/><stop offset="0.070" stop-color="#919292"/><stop offset="0.076" stop-color="#929393"/><stop offset="0.080" stop-color="#929493"/><stop offset="0.100" stop-color="#959796"/><stop offset="0.120" stop-color="#979898"/><stop offset="0.150" stop-color="#989a99"/><stop offset="0.200" stop-color="#9b9d9c"/><stop offset="0.210" stop-color="#9c9d9d"/><stop offset="0.270" stop-color="#9fa0a0"/><stop offset="0.280" stop-color="#9fa1a0"/><stop offset="0.350" stop-color="#9d9f9e"/><stop offset="0.420" stop-color="#9c9d9d"/><stop offset="0.490" stop-color="#9a9c9b"/><stop offset="0.550" stop-color="#929493"/><stop offset="0.600" stop-color="#8c8e8d"/><stop offset="0.650" stop-color="#848686"/><stop offset="0.700" stop-color="#7c7e7d"/><stop offset="0.740" stop-color="#767777"/><stop offset="0.790" stop-color="#6d6e6e"/><stop offset="0.820" stop-color="#686969"/><stop offset="0.857" stop-color="#616161"/><stop offset="0.886" stop-color="#5c5c5c"/><stop offset="0.900" stop-color="#575757"/><stop offset="0.915" stop-color="#505050"/><stop offset="0.922" stop-color="#494949"/><stop offset="0.925" stop-color="#464646"/><stop offset="0.927" stop-color="#444444"/><stop offset="0.930" stop-color="#424242"/><stop offset="0.940" stop-color="#3c3c3c"/><stop offset="0.950" stop-color="#3c3c3c"/><stop offset="0.955" stop-color="#3c3c3c"/><stop offset="0.960" stop-color="#3d3d3d"/><stop offset="0.965" stop-color="#404040"/><stop offset="0.975" stop-color="#464646"/><stop offset="0.985" stop-color="#474747"/><stop offset="0.990" stop-color="#484848"/><stop offset="1.000" stop-color="#3e3e3e"/></linearGradient><linearGradient id="g212"><stop offset="0.010" stop-color="#7c7d7d"/><stop offset="0.020" stop-color="#818282"/><stop offset="0.030" stop-color="#858786"/><stop offset="0.035" stop-color="#878988"/><stop offset="0.050" stop-color="#8c8e8d"/><stop offset="0.055" stop-color="#8e908f"/><stop offset="0.060" stop-color="#909191"/><stop offset="0.070" stop-color="#919292"/><stop offset="0.076" stop-color="#929393"/><stop offset="0.080" stop-color="#929493"/><stop offset="0.100" stop-color="#959796"/><stop offset="0.120" stop-color="#979898"/><stop offset="0.150" stop-color="#999a9a"/><stop offset="0.200" stop-color="#9b9d9c"/><stop offset="0.210" stop-color="#9c9d9d"/><stop offset="0.270" stop-color="#9fa1a0"/><stop offset="0.280" stop-color="#9fa1a0"/><stop offset="0.350" stop-color="#9e9f9f"/><stop offset="0.420" stop-color="#9c9d9d"/><stop offset="0.490" stop-color="#9a9c9b"/><stop offset="0.550" stop-color="#939494"/><stop offset="0.600" stop-color="#8d8e8e"/><stop offset="0.650" stop-color="#858786"/><stop offset="0.700" stop-color="#7d7e7e"/><stop offset="0.740" stop-color="#767877"/><stop offset="0.790" stop-color="#6d6f6e"/><stop offset="0.820" stop-color="#686969"/><stop offset="0.857" stop-color="#616161"/><stop offset="0.886" stop-color="#5b5b5b"/><stop offset="0.900" stop-color="#575757"/><stop offset="0.915" stop-color="#4f4f4f"/><stop offset="0.922" stop-color="#494949"/><stop offset="0.925" stop-color="#464646"/><stop offset="0.927" stop-color="#444444"/><stop offset="0.930" stop-color="#424242"/><stop offset="0.940" stop-color="#3c3c3c"/><stop offset="0.950" stop-color="#3c3c3c"/><stop offset="0.955" stop-color="#3b3b3b"/><stop offset="0.960" stop-color="#3d3d3d"/><stop offset="0.965" stop-color="#404040"/><stop offset="0.975" stop-color="#454545"/><stop offset="0.985" stop-color="#474747"/><stop offset="0.990" stop-color="#484848"/><stop offset="1.000" stop-color="#3e3e3e"/></linearGradient><linearGradient id="g216"><stop offset="0.010" stop-color="#7c7d7d"/><stop offset="0.020" stop-color="#808281"/><stop offset="0.030" stop-color="#858786"/><stop offset="0.035" stop-color="#878888"/><stop offset="0.050" stop-color="#8d8e8e"/><stop offset="0.055" stop-color="#8e908f"/><stop offset="0.060" stop-color="#909191"/><stop offset="0.070" stop-color="#919392"/><stop offset="0.076" stop-color="#929393"/><stop offset="0.080" stop-color="#939494"/><stop offset="0.100" stop-color="#959796"/><stop offset="0.120" stop-color="#979998"/><stop offset="0.150" stop-color="#999a9a"/><stop offset="0.200" stop-color="#9c9d9d"/><stop offset="0.210" stop-color="#9c9e9d"/><stop offset="0.270" stop-color="#9fa1a0"/><stop offset="0.280" stop-color="#9fa1a0"/><stop offset="0.350" stop-color="#9e9f9f"/><stop offset="0.420" stop-color="#9c9d9d"/><stop offset="0.490" stop-color="#9a9c9b"/><stop offset="0.550" stop-color="#939594"/><stop offset="0.600" stop-color="#8d8f8e"/><stop offset="0.650" stop-color="#868787"/><stop offset="0.700" stop-color="#7e7f7f"/><stop offset="0.740" stop-color="#777878"/><stop offset="0.790" stop-color="#6e6f6f"/><stop offset="0.820" stop-color="#686a69"/><stop offset="0.857" stop-color="#616161"/><stop offset="0.886" stop-color="#5b5b5b"/><stop offset="0.900" stop-color="#565656"/><stop offset="0.915" stop-color="#4f4f4f"/><stop offset="0.922" stop-color="#494949"/><stop offset="0.925" stop-color="#464646"/><stop offset="0.927" stop-color="#454545"/><stop offset="0.930" stop-color="#434343"/><stop offset="0.940" stop-color="#3c3c3c"/><stop offset="0.950" stop-color="#3c3c3c"/><stop offset="0.955" stop-color="#3b3b3b"/><stop offset="0.960" stop-color="#3c3c3c"/><stop offset="0.965" stop-color="#3f3f3f"/><stop offset="0.975" stop-color="#454545"/><stop offset="0.985" stop-color="#474747"/><stop offset="0.990" stop-color="#484848"/><stop offset="1.000" stop-color="#3e3e3e"/></linearGradient><linearGradient id="g220"><stop offset="0.010" stop-color="#7b7d7c"/><stop offset="0.020" stop-color="#808281"/><stop offset="0.030" stop-color="#858686"/><stop offset="0.035" stop-color="#878888"/><stop offset="0.050" stop-color="#8d8e8e"/><stop offset="0.055" stop-color="#8e908f"/><stop offset="0.060" stop-color="#909291"/><stop offset="0.070" stop-color="#919392"/><stop offset="0.076" stop-color="#929493"/><stop offset="0.080" stop-color="#939494"/><stop offset="0.100" stop-color="#959796"/><stop offset="0.120" stop-color="#979998"/><stop offset="0.150" stop-color="#999a9a"/><stop offset="0.200" stop-color="#9c9d9d"/><stop offset="0.210" stop-color="#9c9e9d"/><stop offset="0.270" stop-color="#9fa1a0"/><stop offset="0.280" stop-color="#9fa1a0"/><stop offset="0.350" stop-color="#9e9f9f"/><stop offset="0.420" stop-color="#9c9d9d"/><stop offset="0.490" stop-color="#9a9c9b"/><stop offset="0.550" stop-color="#939594"/><stop offset="0.600" stop-color="#8e8f8f"/><stop offset="0.650" stop-color="#868887"/><stop offset="0.700" stop-color="#7e807f"/><stop offset="0.740" stop-color="#777978"/><stop offset="0.790" stop-color="#6e706f"/><stop offset="0.820" stop-color="#686a69"/><stop offset="0.857" stop-color="#616161"/><stop offset="0.886" stop-color="#5a5a5a"/><stop offset="0.900" stop-color="#565656"/><stop offset="0.915" stop-color="#4e4e4e"/><stop offset="0.922" stop-color="#494949"/><stop offset="0.925" stop-color="#464646"/><stop offset="0.927" stop-color="#454545"/><stop offset="0.930" stop-color="#434343"/><stop offset="0.940" stop-color="#3c3c3c"/><stop offset="0.950" stop-color="#3b3b3b"/><stop offset="0.955" stop-color="#3b3b3b"/><stop offset="0.960" stop-color="#3c3c3c"/><stop offset="0.965" stop-color="#3f3f3f"/><stop offset="0.975" stop-color="#454545"/><stop offset="0.985" stop-color="#474747"/><stop offset="0.990" stop-color="#484848"/><stop offset="1.000" stop-color="#3e3e3e"/></linearGradient><linearGradient id="g224"><stop offset="0.010" stop-color="#7b7d7c"/><stop offset="0.020" stop-color="#808181"/><stop offset="0.030" stop-color="#858686"/><stop offset="0.035" stop-color="#878888"/><stop offset="0.050" stop-color="#8d8e8e"/><stop offset="0.055" stop-color="#8f9090"/><stop offset="0.060" stop-color="#909291"/><stop offset="0.070" stop-color="#929393"/><stop offset="0.076" stop-color="#929493"/><stop offset="0.080" stop-color="#939494"/><stop offset="0.100" stop-color="#959796"/><stop offset="0.120" stop-color="#979998"/><stop offset="0.150" stop-color="#999b9a"/><stop offset="0.200" stop-color="#9c9d9d"/><stop offset="0.210" stop-color="#9c9e9d"/><stop offset="0.270" stop-color="#9fa1a0"/><stop offset="0.280" stop-color="#9fa1a0"/><stop offset="0.350" stop-color="#9e9f9f"/><stop offset="0.420" stop-color="#9c9d9d"/><stop offset="0.490" stop-color="#9a9c9b"/><stop offset="0.550" stop-color="#949595"/><stop offset="0.600" stop-color="#8e908f"/><stop offset="0.650" stop-color="#878888"/><stop offset="0.700" stop-color="#7f8080"/><stop offset="0.740" stop-color="#787979"/><stop offset="0.790" stop-color="#6f7070"/><stop offset="0.820" stop-color="#686a69"/><stop offset="0.857" stop-color="#616161"/><stop offset="0.886" stop-color="#5a5a5a"/><stop offset="0.900" stop-color="#555555"/><stop offset="0.915" stop-color="#4e4e4e"/><stop offset="0.922" stop-color="#494949"/><stop offset="0.925" stop-color="#464646"/><stop offset="0.927" stop-color="#454545"/><stop offset="0.930" stop-color="#434343"/><stop offset="0.940" stop-color="#3c3c3c"/><stop offset="0.950" stop-color="#3b3b3b"/><stop offset="0.955" stop-color="#3b3b3b"/><stop offset="0.960" stop-color="#3c3c3c"/><stop offset="0.965" stop-color="#3f3f3f"/><stop offset="0.975" stop-color="#454545"/><stop offset="0.985" stop-color="#474747"/><stop offset="0.990" stop-color="#484848"/><stop offset="1.000" stop-color="#3e3e3e"/></linearGradient><linearGradient id="g228"><stop offset="0.010" stop-color="#7b7c7c"/><stop offset="0.020" stop-color="#808181"/><stop offset="0.030" stop-color="#848686"/><stop offset="0.035" stop-color="#878888"/><stop offset="0.050" stop-color="#8d8e8e"/><stop offset="0.055" stop-color="#8f9090"/><stop offset="0.060" stop-color="#909291"/><stop offset="0.070" stop-color="#929393"/><stop offset="0.076" stop-color="#929493"/><stop offset="0.080" stop-color="#939494"/><stop offset="0.100" stop-color="#969796"/><stop offset="0.120" stop-color="#989999"/><stop offset="0.150" stop-color="#999b9a"/><stop offset="0.200" stop-color="#9c9d9d"/><stop offset="0.210" stop-color="#9c9e9d"/><stop offset="0.270" stop-color="#a0a1a1"/><stop offset="0.280" stop-color="#a0a1a1"/><stop offset="0.350" stop-color="#9e9f9f"/><stop offset="0.420" stop-color="#9c9d9d"/><stop offset="0.490" stop-color="#9a9c9b"/><stop offset="0.550" stop-color="#949595"/><stop offset="0.600" stop-color="#8f9090"/><stop offset="0.650" stop-color="#888988"/><stop offset="0.700" stop-color="#7f8180"/><stop offset="0.740" stop-color="#797a7a"/><stop offset="0.790" stop-color="#6f7070"/><stop offset="0.820" stop-color="#696a6a"/><stop offset="0.857" stop-color="#616161"/><stop offset="0.886" stop-color="#595959"/><stop offset="0.900" stop-color="#555555"/><stop offset="0.915" stop-color="#4d4d4d"/><stop offset="0.922" stop-color="#484848"/><stop offset="0.925" stop-color="#464646"/><stop offset="0.927" stop-color="#454545"/><stop offset="0.930" stop-color="#434343"/><stop offset="0.940" stop-color="#3c3c3c"/><stop offset="0.950" stop-color="#3b3b3b"/><stop offset="0.955" stop-color="#3b3b3b"/><stop offset="0.960" stop-color="#3b3b3b"/><stop offset="0.965" stop-color="#3e3e3e"/><stop offset="0.975" stop-color="#444444"/><stop offset="0.985" stop-color="#474747"/><stop offset="0.990" stop-color="#484848"/><stop offset="1.000" stop-color="#3e3e3e"/></linearGradient><linearGradient id="g232"><stop offset="0.010" stop-color="#7a7c7b"/><stop offset="0.020" stop-color="#7f8180"/><stop offset="0.030" stop-color="#848685"/><stop offset="0.035" stop-color="#868887"/><stop offset="0.050" stop-color="#8d8e8e"/><stop offset="0.055" stop-color="#8f9090"/><stop offset="0.060" stop-color="#919292"/><stop offset="0.070" stop-color="#929393"/><stop offset="0.076" stop-color="#939494"/><stop offset="0.080" stop-color="#939594"/><stop offset="0.100" stop-color="#969797"/><stop offset="0.120" stop-color="#989999"/><stop offset="0.150" stop-color="#999b9a"/><stop offset="0.200" stop-color="#9c9e9d"/><stop offset="0.210" stop-color="#9d9e9e"/><stop offset="0.270" stop-color="#a0a1a1"/><stop offset="0.280" stop-color="#a0a1a1"/><stop offset="0.350" stop-color="#9e9f9f"/><stop offset="0.420" stop-color="#9c9d9d"/><stop offset="0.490" stop-color="#9a9c9b"/><stop offset="0.550" stop-color="#949695"/><stop offset="0.600" stop-color="#8f9190"/><stop offset="0.650" stop-color="#888a89"/><stop offset="0.700" stop-color="#808181"/><stop offset="0.740" stop-color="#797b7a"/><stop offset="0.790" stop-color="#6f7170"/><stop offset="0.820" stop-color="#696a6a"/><stop offset="0.857" stop-color="#616161"/><stop offset="0.886" stop-color="#595959"/><stop offset="0.900" stop-color="#555555"/><stop offset="0.915" stop-color="#4d4d4d"/><stop offset="0.922" stop-color="#484848"/><stop offset="0.925" stop-color="#464646"/><stop offset="0.927" stop-color="#454545"/><stop offset="0.930" stop-color="#434343"/><stop offset="0.940" stop-color="#3c3c3c"/><stop offset="0.950" stop-color="#3b3b3b"/><stop offset="0.955" stop-color="#3b3b3b"/><stop offset="0.960" stop-color="#3b3b3b"/><stop offset="0.965" stop-color="#3e3e3e"/><stop offset="0.975" stop-color="#444444"/><stop offset="0.985" stop-color="#474747"/><stop offset="0.990" stop-color="#484848"/><stop offset="1.000" stop-color="#3e3e3e"/></linearGradient><linearGradient id="g236"><stop offset="0.010" stop-color="#7a7c7b"/><stop offset="0.020" stop-color="#7f8180"/><stop offset="0.030" stop-color="#848685"/><stop offset="0.035" stop-color="#868887"/><stop offset="0.050" stop-color="#8d8e8e"/><stop offset="0.055" stop-color="#8f9090"/><stop offset="0.060" stop-color="#919292"/><stop offset="0.070" stop-color="#929493"/><stop offset="0.076" stop-color="#939494"/><stop offset="0.080" stop-color="#939594"/><stop offset="0.100" stop-color="#969797"/><stop offset="0.120" stop-color="#989999"/><stop offset="0.150" stop-color="#9a9b9b"/><stop offset="0.200" stop-color="#9c9e9d"/><stop offset="0.210" stop-color="#9d9e9e"/><stop offset="0.270" stop-color="#a0a1a1"/><stop offset="0.280" stop-color="#a0a1a1"/><stop offset="0.350" stop-color="#9e9f9f"/><stop offset="0.420" stop-color="#9c9d9d"/><stop offset="0.490" stop-color="#9a9c9b"/><stop offset="0.550" stop-color="#949695"/><stop offset="0.600" stop-color="#909191"/><stop offset="0.650" stop-color="#898a8a"/><stop offset="0.700" stop-color="#808281"/><stop offset="0.740" stop-color="#7a7b7b"/><stop offset="0.790" stop-color="#707171"/><stop offset="0.820" stop-color="#696b6a"/><stop offset="0.857" stop-color="#616161"/><stop offset="0.886" stop-color="#585858"/><stop offset="0.900" stop-color="#545454"/><stop offset="0.915" stop-color="#4c4c4c"/><stop offset="0.922" stop-color="#484848"/><stop offset="0.925" stop-color="#474747"/><stop offset="0.927" stop-color="#454545"/><stop offset="0.930" stop-color="#434343"/><stop offset="0.940" stop-color="#3c3c3c"/><stop offset="0.950" stop-color="#3b3b3b"/><stop offset="0.955" stop-color="#3b3b3b"/><stop offset="0.960" stop-color="#3a3a3a"/><stop offset="0.965" stop-color="#3e3e3e"/><stop offset="0.975" stop-color="#444444"/><stop offset="0.985" stop-color="#474747"/><stop offset="0.990" stop-color="#484848"/><stop offset="1.000" stop-color="#3e3e3e"/></linearGradient><linearGradient id="g240"><stop offset="0.010" stop-color="#7a7c7b"/><stop offset="0.020" stop-color="#7f8180"/><stop offset="0.030" stop-color="#848685"/><stop offset="0.035" stop-color="#868887"/><stop offset="0.050" stop-color="#8d8e8e"/><stop offset="0.055" stop-color="#8f9090"/><stop offset="0.060" stop-color="#919292"/><stop offset="0.070" stop-color="#929493"/><stop offset="0.076" stop-color="#939494"/><stop offset="0.080" stop-color="#939594"/><stop offset="0.100" stop-color="#969797"/><stop offset="0.120" stop-color="#989999"/><stop offset="0.150" stop-color="#9a9b9b"/><stop offset="0.200" stop-color="#9c9e9d"/><stop offset="0.210" stop-color="#9d9e9e"/><stop offset="0.270" stop-color="#a0a1a1"/><stop offset="0.280" stop-color="#a0a1a1"/><stop offset="0.350" stop-color="#9e9f9f"/><stop offset="0.420" stop-color="#9c9d9d"/><stop offset="0.490" stop-color="#9a9c9b"/><stop offset="0.550" stop-color="#959696"/><stop offset="0.600" stop-color="#909291"/><stop offset="0.650" stop-color="#898b8a"/><stop offset="0.700" stop-color="#818282"/><stop offset="0.740" stop-color="#7a7c7b"/><stop offset="0.790" stop-color="#707271"/><stop offset="0.820" stop-color="#696b6a"/><stop offset="0.857" stop-color="#616161"/><stop offset="0.886" stop-color="#585858"/><stop offset="0.900" stop-color="#545454"/><stop offset="0.915" stop-color="#4c4c4c"/><stop offset="0.922" stop-color="#484848"/><stop offset="0.925" stop-color="#474747"/><stop offset="0.927" stop-color="#454545"/><stop offset="0.930" stop-color="#434343"/><stop offset="0.940" stop-color="#3c3c3c"/><stop offset="0.950" stop-color="#3b3b3b"/><stop offset="0.955" stop-color="#3b3b3b"/><stop offset="0.960" stop-color="#3a3a3a"/><stop offset="0.965" stop-color="#3d3d3d"/><stop offset="0.975" stop-color="#444444"/><stop offset="0.985" stop-color="#474747"/><stop offset="0.990" stop-color="#484848"/><stop offset="1.000" stop-color="#3e3e3e"/></linearGradient><linearGradient id="g244"><stop offset="0.010" stop-color="#7a7c7b"/><stop offset="0.020" stop-color="#7f8180"/><stop offset="0.030" stop-color="#848685"/><stop offset="0.035" stop-color="#868887"/><stop offset="0.050" stop-color="#8d8e8e"/><stop offset="0.055" stop-color="#8f9090"/><stop offset="0.060" stop-color="#919292"/><stop offset="0.070" stop-color="#929493"/><stop offset="0.076" stop-color="#939594"/><stop offset="0.080" stop-color="#939594"/><stop offset="0.100" stop-color="#969797"/><stop offset="0.120" stop-color="#989999"/><stop offset="0.150" stop-color="#9a9b9b"/><stop offset="0.200" stop-color="#9c9e9d"/><stop offset="0.210" stop-color="#9d9e9e"/><stop offset="0.270" stop-color="#a0a1a1"/><stop offset="0.280" stop-color="#a0a1a1"/><stop offset="0.350" stop-color="#9e9f9f"/><stop offset="0.420" stop-color="#9c9e9d"/><stop offset="0.490" stop-color="#9a9c9b"/><stop offset="0.550" stop-color="#959696"/><stop offset="0.600" stop-color="#909291"/><stop offset="0.650" stop-color="#8a8b8b"/><stop offset="0.700" stop-color="#818382"/><stop offset="0.740" stop-color="#7a7c7b"/><stop offset="0.790" stop-color="#707271"/><stop offset="0.820" stop-color="#6a6b6b"/><stop offset="0.857" stop-color="#616161"/><stop offset="0.886" stop-color="#585858"/><stop offset="0.900" stop-color="#545454"/><stop offset="0.915" stop-color="#4c4c4c"/><stop offset="0.922" stop-color="#484848"/><stop offset="0.925" stop-color="#474747"/><stop offset="0.927" stop-color="#464646"/><stop offset="0.930" stop-color="#444444"/><stop offset="0.940" stop-color="#3c3c3c"/><stop offset="0.950" stop-color="#3b3b3b"/><stop offset="0.955" stop-color="#3b3b3b"/><stop offset="0.960" stop-color="#3a3a3a"/><stop offset="0.965" stop-color="#3d3d3d"/><stop offset="0.975" stop-color="#444444"/><stop offset="0.985" stop-color="#474747"/><stop offset="0.990" stop-color="#484848"/><stop offset="1.000" stop-color="#3e3e3e"/></linearGradient><linearGradient id="g248"><stop offset="0.010" stop-color="#7a7c7b"/><stop offset="0.020" stop-color="#7f8180"/><stop offset="0.030" stop-color="#848685"/><stop offset="0.035" stop-color="#868887"/><stop offset="0.050" stop-color="#8d8e8e"/><stop offset="0.055" stop-color="#8f9090"/><stop offset="0.060" stop-color="#919292"/><stop offset="0.070" stop-color="#929493"/><stop offset="0.076" stop-color="#939594"/><stop offset="0.080" stop-color="#949595"/><stop offset="0.100" stop-color="#969797"/><stop offset="0.120" stop-color="#989999"/><stop offset="0.150" stop-color="#9a9b9b"/><stop offset="0.200" stop-color="#9d9e9e"/><stop offset="0.210" stop-color="#9d9f9e"/><stop offset="0.270" stop-color="#a0a1a1"/><stop offset="0.280" stop-color="#a0a1a1"/><stop offset="0.350" stop-color="#9e9f9f"/><stop offset="0.420" stop-color="#9c9e9d"/><stop offset="0.490" stop-color="#9b9c9c"/><stop offset="0.550" stop-color="#959796"/><stop offset="0.600" stop-color="#919292"/><stop offset="0.650" stop-color="#8a8c8b"/><stop offset="0.700" stop-color="#818382"/><stop offset="0.740" stop-color="#7b7c7c"/><stop offset="0.790" stop-color="#717272"/><stop offset="0.820" stop-color="#6a6b6b"/><stop offset="0.857" stop-color="#626262"/><stop offset="0.886" stop-color="#595959"/><stop offset="0.900" stop-color="#545454"/><stop offset="0.915" stop-color="#4c4c4c"/><stop offset="0.922" stop-color="#494949"/><stop offset="0.925" stop-color="#474747"/><stop offset="0.927" stop-color="#464646"/><stop offset="0.930" stop-color="#444444"/><stop offset="0.940" stop-color="#3d3d3d"/><stop offset="0.950" stop-color="#3b3b3b"/><stop offset="0.955" stop-color="#3b3b3b"/><stop offset="0.960" stop-color="#3a3a3a"/><stop offset="0.965" stop-color="#3e3e3e"/><stop offset="0.975" stop-color="#444444"/><stop offset="0.985" stop-color="#474747"/><stop offset="0.990" stop-color="#484848"/><stop offset="1.000" stop-color="#3e3e3e"/></linearGradient><linearGradient id="g252"><stop offset="0.010" stop-color="#7a7c7b"/><stop offset="0.020" stop-color="#7f8180"/><stop offset="0.030" stop-color="#848685"/><stop offset="0.035" stop-color="#868887"/><stop offset="0.050" stop-color="#8d8e8e"/><stop offset="0.055" stop-color="#8f9090"/><stop offset="0.060" stop-color="#919292"/><stop offset="0.070" stop-color="#939494"/><stop offset="0.076" stop-color="#939594"/><stop offset="0.080" stop-color="#949595"/><stop offset="0.100" stop-color="#969797"/><stop offset="0.120" stop-color="#989999"/><stop offset="0.150" stop-color="#9a9b9b"/><stop offset="0.200" stop-color="#9d9e9e"/><stop offset="0.210" stop-color="#9d9f9e"/><stop offset="0.270" stop-color="#a0a1a1"/><stop offset="0.280" stop-color="#a0a1a1"/><stop offset="0.350" stop-color="#9ea09f"/><stop offset="0.420" stop-color="#9d9e9e"/><stop offset="0.490" stop-color="#9b9c9c"/><stop offset="0.550" stop-color="#969797"/><stop offset="0.600" stop-color="#919392"/><stop offset="0.650" stop-color="#8a8c8b"/><stop offset="0.700" stop-color="#828383"/><stop offset="0.740" stop-color="#7b7c7c"/><stop offset="0.790" stop-color="#717272"/><stop offset="0.820" stop-color="#6a6c6b"/><stop offset="0.857" stop-color="#626262"/><stop offset="0.886" stop-color="#595959"/><stop offset="0.900" stop-color="#545454"/><stop offset="0.915" stop-color="#4d4d4d"/><stop offset="0.922" stop-color="#494949"/><stop offset="0.925" stop-color="#474747"/><stop offset="0.927" stop-color="#464646"/><stop offset="0.930" stop-color="#444444"/><stop offset="0.940" stop-color="#3d3d3d"/><stop offset="0.950" stop-color="#3b3b3b"/><stop offset="0.955" stop-color="#3b3b3b"/><stop offset="0.960" stop-color="#3a3a3a"/><stop offset="0.965" stop-color="#3e3e3e"/><stop offset="0.975" stop-color="#444444"/><stop offset="0.985" stop-color="#474747"/><stop offset="0.990" stop-color="#484848"/><stop offset="1.000" stop-color="#3e3e3e"/></linearGradient><linearGradient id="g256"><stop offset="0.010" stop-color="#7b7c7c"/><stop offset="0.020" stop-color="#808181"/><stop offset="0.030" stop-color="#858686"/><stop offset="0.035" stop-color="#878888"/><stop offset="0.050" stop-color="#8d8e8e"/><stop offset="0.055" stop-color="#8f9090"/><stop offset="0.060" stop-color="#919292"/><stop offset="0.070" stop-color="#939494"/><stop offset="0.076" stop-color="#939594"/><stop offset="0.080" stop-color="#949595"/><stop offset="0.100" stop-color="#969797"/><stop offset="0.120" stop-color="#989999"/><stop offset="0.150" stop-color="#9a9b9b"/><stop offset="0.200" stop-color="#9d9e9e"/><stop offset="0.210" stop-color="#9d9f9e"/><stop offset="0.270" stop-color="#a0a1a1"/><stop offset="0.280" stop-color="#a0a1a1"/><stop offset="0.350" stop-color="#9ea09f"/><stop offset="0.420" stop-color="#9d9e9e"/><stop offset="0.490" stop-color="#9b9d9c"/><stop offset="0.550" stop-color="#969797"/><stop offset="0.600" stop-color="#929393"/><stop offset="0.650" stop-color="#8b8c8c"/><stop offset="0.700" stop-color="#828483"/><stop offset="0.740" stop-color="#7b7d7c"/><stop offset="0.790" stop-color="#717372"/><stop offset="0.820" stop-color="#6a6c6b"/><stop offset="0.857" stop-color="#626262"/><stop offset="0.886" stop-color="#595959"/><stop offset="0.900" stop-color="#555555"/><stop offset="0.915" stop-color="#4d4d4d"/><stop offset="0.922" stop-color="#494949"/><stop offset="0.925" stop-color="#484848"/><stop offset="0.927" stop-color="#464646"/><stop offset="0.930" stop-color="#444444"/><stop offset="0.940" stop-color="#3d3d3d"/><stop offset="0.950" stop-color="#3c3c3c"/><stop offset="0.955" stop-color="#3b3b3b"/><stop offset="0.960" stop-color="#3b3b3b"/><stop offset="0.965" stop-color="#3e3e3e"/><stop offset="0.975" stop-color="#444444"/><stop offset="0.985" stop-color="#474747"/><stop offset="0.990" stop-color="#484848"/><stop offset="1.000" stop-color="#3e3e3e"/></linearGradient><linearGradient id="g260"><stop offset="0.010" stop-color="#7b7c7c"/><stop offset="0.020" stop-color="#808181"/><stop offset="0.030" stop-color="#858686"/><stop offset="0.035" stop-color="#878888"/><stop offset="0.050" stop-color="#8d8e8e"/><stop offset="0.055" stop-color="#8f9090"/><stop offset="0.060" stop-color="#919292"/><stop offset="0.070" stop-color="#939494"/><stop offset="0.076" stop-color="#939594"/><stop offset="0.080" stop-color="#949595"/><stop offset="0.100" stop-color="#969797"/><stop offset="0.120" stop-color="#989999"/><stop offset="0.150" stop-color="#9a9b9b"/><stop offset="0.200" stop-color="#9d9e9e"/><stop offset="0.210" stop-color="#9d9f9e"/><stop offset="0.270" stop-color="#a0a1a1"/><stop offset="0.280" stop-color="#9fa1a0"/><stop offset="0.350" stop-color="#9ea09f"/><stop offset="0.420" stop-color="#9d9e9e"/><stop offset="0.490" stop-color="#9c9d9d"/><stop offset="0.550" stop-color="#969897"/><stop offset="0.600" stop-color="#929393"/><stop offset="0.650" stop-color="#8b8d8c"/><stop offset="0.700" stop-color="#828483"/><stop offset="0.740" stop-color="#7b7d7c"/><stop offset="0.790" stop-color="#717372"/><stop offset="0.820" stop-color="#6b6c6c"/><stop offset="0.857" stop-color="#626262"/><stop offset="0.886" stop-color="#595959"/><stop offset="0.900" stop-color="#555555"/><stop offset="0.915" stop-color="#4d4d4d"/><stop offset="0.922" stop-color="#494949"/><stop offset="0.925" stop-color="#484848"/><stop offset="0.927" stop-color="#474747"/><stop offset="0.930" stop-color="#454545"/><stop offset="0.940" stop-color="#3e3e3e"/><stop offset="0.950" stop-color="#3c3c3c"/><stop offset="0.955" stop-color="#3b3b3b"/><stop offset="0.960" stop-color="#3b3b3b"/><stop offset="0.965" stop-color="#3e3e3e"/><stop offset="0.975" stop-color="#444444"/><stop offset="0.985" stop-color="#474747"/><stop offset="0.990" stop-color="#484848"/><stop offset="1.000" stop-color="#3e3e3e"/></linearGradient><linearGradient id="g264"><stop offset="0.010" stop-color="#7b7c7c"/><stop offset="0.020" stop-color="#808181"/><stop offset="0.030" stop-color="#858686"/><stop offset="0.035" stop-color="#878888"/><stop offset="0.050" stop-color="#8d8e8e"/><stop offset="0.055" stop-color="#8f9090"/><stop offset="0.060" stop-color="#919292"/><stop offset="0.070" stop-color="#939494"/><stop offset="0.076" stop-color="#939594"/><stop offset="0.080" stop-color="#949595"/><stop offset="0.100" stop-color="#969797"/><stop offset="0.120" stop-color="#989999"/><stop offset="0.150" stop-color="#9a9b9b"/><stop offset="0.200" stop-color="#9d9e9e"/><stop offset="0.210" stop-color="#9e9f9f"/><stop offset="0.270" stop-color="#a0a1a1"/><stop offset="0.280" stop-color="#9fa1a0"/><stop offset="0.350" stop-color="#9ea09f"/><stop offset="0.420" stop-color="#9d9f9e"/><stop offset="0.490" stop-color="#9c9d9d"/><stop offset="0.550" stop-color="#979898"/><stop offset="0.600" stop-color="#929493"/><stop offset="0.650" stop-color="#8c8d8d"/><stop offset="0.700" stop-color="#838484"/><stop offset="0.740" stop-color="#7b7d7c"/><stop offset="0.790" stop-color="#717372"/><stop offset="0.820" stop-color="#6b6c6c"/><stop offset="0.857" stop-color="#626262"/><stop offset="0.886" stop-color="#595959"/><stop offset="0.900" stop-color="#555555"/><stop offset="0.915" stop-color="#4d4d4d"/><stop offset="0.922" stop-color="#494949"/><stop offset="0.925" stop-color="#484848"/><stop offset="0.927" stop-color="#474747"/><stop offset="0.930" stop-color="#454545"/><stop offset="0.940" stop-color="#3e3e3e"/><stop offset="0.950" stop-color="#3c3c3c"/><stop offset="0.955" stop-color="#3b3b3b"/><stop offset="0.960" stop-color="#3b3b3b"/><stop offset="0.965" stop-color="#3e3e3e"/><stop offset="0.975" stop-color="#444444"/><stop offset="0.985" stop-color="#474747"/><stop offset="0.990" stop-color="#484848"/><stop offset="1.000" stop-color="#3e3e3e"/></linearGradient><linearGradient id="g268"><stop offset="0.010" stop-color="#7b7c7c"/><stop offset="0.020" stop-color="#808181"/><stop offset="0.030" stop-color="#858686"/><stop offset="0.035" stop-color="#878888"/><stop offset="0.050" stop-color="#8d8e8e"/><stop offset="0.055" stop-color="#8f9090"/><stop offset="0.060" stop-color="#919292"/><stop offset="0.070" stop-color="#939494"/><stop offset="0.076" stop-color="#949595"/><stop offset="0.080" stop-color="#949595"/><stop offset="0.100" stop-color="#969797"/><stop offset="0.120" stop-color="#989999"/><stop offset="0.150" stop-color="#9a9b9b"/><stop offset="0.200" stop-color="#9d9f9e"/><stop offset="0.210" stop-color="#9e9f9f"/><stop offset="0.270" stop-color="#a0a1a1"/><stop offset="0.280" stop-color="#9fa1a0"/><stop offset="0.350" stop-color="#9ea09f"/><stop offset="0.420" stop-color="#9d9f9e"/><stop offset="0.490" stop-color="#9c9e9d"/><stop offset="0.550" stop-color="#979898"/><stop offset="0.600" stop-color="#939494"/><stop offset="0.650" stop-color="#8c8e8d"/><stop offset="0.700" stop-color="#838484"/><stop offset="0.740" stop-color="#7c7d7d"/><stop offset="0.790" stop-color="#727373"/><stop offset="0.820" stop-color="#6b6d6c"/><stop offset="0.857" stop-color="#636363"/><stop offset="0.886" stop-color="#595959"/><stop offset="0.900" stop-color="#555555"/><stop offset="0.915" stop-color="#4d4d4d"/><stop offset="0.922" stop-color="#4a4a4a"/><stop offset="0.925" stop-color="#484848"/><stop offset="0.927" stop-color="#474747"/><stop offset="0.930" stop-color="#454545"/><stop offset="0.940" stop-color="#3e3e3e"/><stop offset="0.950" stop-color="#3c3c3c"/><stop offset="0.955" stop-color="#3b3b3b"/><stop offset="0.960" stop-color="#3b3b3b"/><stop offset="0.965" stop-color="#3e3e3e"/><stop offset="0.975" stop-color="#444444"/><stop offset="0.985" stop-color="#474747"/><stop offset="0.990" stop-color="#484848"/><stop offset="1.000" stop-color="#3e3e3e"/></linearGradient><linearGradient id="g272"><stop offset="0.010" stop-color="#7b7c7c"/><stop offset="0.020" stop-color="#808181"/><stop offset="0.030" stop-color="#858686"/><stop offset="0.035" stop-color="#878888"/><stop offset="0.050" stop-color="#8d8e8e"/><stop offset="0.055" stop-color="#8f9090"/><stop offset="0.060" stop-color="#919292"/><stop offset="0.070" stop-color="#939594"/><stop offset="0.076" stop-color="#949595"/><stop offset="0.080" stop-color="#949695"/><stop offset="0.100" stop-color="#969897"/><stop offset="0.120" stop-color="#989999"/><stop offset="0.150" stop-color="#9a9b9b"/><stop offset="0.200" stop-color="#9d9f9e"/><stop offset="0.210" stop-color="#9e9f9f"/><stop offset="0.270" stop-color="#a0a1a1"/><stop offset="0.280" stop-color="#9fa1a0"/><stop offset="0.350" stop-color="#9ea09f"/><stop offset="0.420" stop-color="#9d9f9e"/><stop offset="0.490" stop-color="#9c9e9d"/><stop offset="0.550" stop-color="#979998"/><stop offset="0.600" stop-color="#939594"/><stop offset="0.650" stop-color="#8c8e8d"/><stop offset="0.700" stop-color="#838584"/><stop offset="0.740" stop-color="#7c7d7d"/><stop offset="0.790" stop-color="#727373"/><stop offset="0.820" stop-color="#6b6d6c"/><stop offset="0.857" stop-color="#636363"/><stop offset="0.886" stop-color="#5a5a5a"/><stop offset="0.900" stop-color="#555555"/><stop offset="0.915" stop-color="#4d4d4d"/><stop offset="0.922" stop-color="#4a4a4a"/><stop offset="0.925" stop-color="#484848"/><stop offset="0.927" stop-color="#474747"/><stop offset="0.930" stop-color="#464646"/><stop offset="0.940" stop-color="#3f3f3f"/><stop offset="0.950" stop-color="#3c3c3c"/><stop offset="0.955" stop-color="#3c3c3c"/><stop offset="0.960" stop-color="#3b3b3b"/><stop offset="0.965" stop-color="#3e3e3e"/><stop offset="0.975" stop-color="#444444"/><stop offset="0.985" stop-color="#474747"/><stop offset="0.990" stop-color="#484848"/><stop offset="1.000" stop-color="#3e3e3e"/></linearGradient><linearGradient id="g276"><stop offset="0.010" stop-color="#7b7d7c"/><stop offset="0.020" stop-color="#808281"/><stop offset="0.030" stop-color="#858786"/><stop offset="0.035" stop-color="#878988"/><stop offset="0.050" stop-color="#8d8e8e"/><stop offset="0.055" stop-color="#8f9090"/><stop offset="0.060" stop-color="#919292"/><stop offset="0.070" stop-color="#939594"/><stop offset="0.076" stop-color="#949595"/><stop offset="0.080" stop-color="#949695"/><stop offset="0.100" stop-color="#969897"/><stop offset="0.120" stop-color="#989999"/><stop offset="0.150" stop-color="#9a9b9b"/><stop offset="0.200" stop-color="#9d9f9e"/><stop offset="0.210" stop-color="#9e9f9f"/><stop offset="0.270" stop-color="#9fa1a0"/><stop offset="0.280" stop-color="#9fa1a0"/><stop offset="0.350" stop-color="#9ea09f"/><stop offset="0.420" stop-color="#9e9f9f"/><stop offset="0.490" stop-color="#9d9e9e"/><stop offset="0.550" stop-color="#989999"/><stop offset="0.600" stop-color="#939594"/><stop offset="0.650" stop-color="#8d8e8e"/><stop offset="0.700" stop-color="#848585"/><stop offset="0.740" stop-color="#7c7e7d"/><stop offset="0.790" stop-color="#727473"/><stop offset="0.820" stop-color="#6b6d6c"/><stop offset="0.857" stop-color="#636363"/><stop offset="0.886" stop-color="#5a5a5a"/><stop offset="0.900" stop-color="#555555"/><stop offset="0.915" stop-color="#4e4e4e"/><stop offset="0.922" stop-color="#4a4a4a"/><stop offset="0.925" stop-color="#494949"/><stop offset="0.927" stop-color="#484848"/><stop offset="0.930" stop-color="#464646"/><stop offset="0.940" stop-color="#3f3f3f"/><stop offset="0.950" stop-color="#3c3c3c"/><stop offset="0.955" stop-color="#3c3c3c"/><stop offset="0.960" stop-color="#3b3b3b"/><stop offset="0.965" stop-color="#3e3e3e"/><stop offset="0.975" stop-color="#444444"/><stop offset="0.985" stop-color="#474747"/><stop offset="0.990" stop-color="#484848"/><stop offset="1.000" stop-color="#3e3e3e"/></linearGradient><linearGradient id="g280"><stop offset="0.010" stop-color="#7b7d7c"/><stop offset="0.020" stop-color="#808281"/><stop offset="0.030" stop-color="#858786"/><stop offset="0.035" stop-color="#878988"/><stop offset="0.050" stop-color="#8d8e8e"/><stop offset="0.055" stop-color="#8f9090"/><stop offset="0.060" stop-color="#919292"/><stop offset="0.070" stop-color="#939594"/><stop offset="0.076" stop-color="#949595"/><stop offset="0.080" stop-color="#949695"/><stop offset="0.100" stop-color="#969897"/><stop offset="0.120" stop-color="#989999"/><stop offset="0.150" stop-color="#9a9c9b"/><stop offset="0.200" stop-color="#9d9f9e"/><stop offset="0.210" stop-color="#9ea09f"/><stop offset="0.270" stop-color="#9fa1a0"/><stop offset="0.280" stop-color="#9fa1a0"/><stop offset="0.350" stop-color="#9fa0a0"/><stop offset="0.420" stop-color="#9e9f9f"/><stop offset="0.490" stop-color="#9d9e9e"/><stop offset="0.550" stop-color="#989999"/><stop offset="0.600" stop-color="#949595"/><stop offset="0.650" stop-color="#8d8f8e"/><stop offset="0.700" stop-color="#848585"/><stop offset="0.740" stop-color="#7c7e7d"/><stop offset="0.790" stop-color="#727473"/><stop offset="0.820" stop-color="#6c6d6d"/><stop offset="0.857" stop-color="#636363"/><stop offset="0.886" stop-color="#5a5a5a"/><stop offset="0.900" stop-color="#555555"/><stop offset="0.915" stop-color="#4e4e4e"/><stop offset="0.922" stop-color="#4a4a4a"/><stop offset="0.925" stop-color="#494949"/><stop offset="0.927" stop-color="#484848"/><stop offset="0.930" stop-color="#464646"/><stop offset="0.940" stop-color="#3f3f3f"/><stop offset="0.950" stop-color="#3c3c3c"/><stop offset="0.955" stop-color="#3c3c3c"/><stop offset="0.960" stop-color="#3b3b3b"/><stop offset="0.965" stop-color="#3e3e3e"/><stop offset="0.975" stop-color="#444444"/><stop offset="0.985" stop-color="#474747"/><stop offset="0.990" stop-color="#484848"/><stop offset="1.000" stop-color="#3e3e3e"/></linearGradient><linearGradient id="g284"><stop offset="0.010" stop-color="#7b7d7c"/><stop offset="0.020" stop-color="#808281"/><stop offset="0.030" stop-color="#858786"/><stop offset="0.035" stop-color="#878988"/><stop offset="0.050" stop-color="#8d8e8e"/><stop offset="0.055" stop-color="#8f9090"/><stop offset="0.060" stop-color="#919292"/><stop offset="0.070" stop-color="#939594"/><stop offset="0.076" stop-color="#949595"/><stop offset="0.080" stop-color="#949695"/><stop offset="0.100" stop-color="#969897"/><stop offset="0.120" stop-color="#989999"/><stop offset="0.150" stop-color="#9a9c9b"/><stop offset="0.200" stop-color="#9e9f9f"/><stop offset="0.210" stop-color="#9ea09f"/><stop offset="0.270" stop-color="#9fa1a0"/><stop offset="0.280" stop-color="#9fa1a0"/><stop offset="0.350" stop-color="#9fa0a0"/><stop offset="0.420" stop-color="#9e9f9f"/><stop offset="0.490" stop-color="#9d9f9e"/><stop offset="0.550" stop-color="#989a99"/><stop offset="0.600" stop-color="#949695"/><stop offset="0.650" stop-color="#8e8f8f"/><stop offset="0.700" stop-color="#848685"/><stop offset="0.740" stop-color="#7d7e7e"/><stop offset="0.790" stop-color="#737474"/><stop offset="0.820" stop-color="#6c6d6d"/><stop offset="0.857" stop-color="#636363"/><stop offset="0.886" stop-color="#5a5a5a"/><stop offset="0.900" stop-color="#555555"/><stop offset="0.915" stop-color="#4e4e4e"/><stop offset="0.922" stop-color="#4b4b4b"/><stop offset="0.925" stop-color="#494949"/><stop offset="0.927" stop-color="#484848"/><stop offset="0.930" stop-color="#464646"/><stop offset="0.940" stop-color="#404040"/><stop offset="0.950" stop-color="#3d3d3d"/><stop offset="0.955" stop-color="#3c3c3c"/><stop offset="0.960" stop-color="#3b3b3b"/><stop offset="0.965" stop-color="#3e3e3e"/><stop offset="0.975" stop-color="#444444"/><stop offset="0.985" stop-color="#474747"/><stop offset="0.990" stop-color="#484848"/><stop offset="1.000" stop-color="#3e3e3e"/></linearGradient><linearGradient id="g288"><stop offset="0.010" stop-color="#7b7d7c"/><stop offset="0.020" stop-color="#808281"/><stop offset="0.030" stop-color="#858786"/><stop offset="0.035" stop-color="#878988"/><stop offset="0.050" stop-color="#8d8e8e"/><stop offset="0.055" stop-color="#8f9090"/><stop offset="0.060" stop-color="#919292"/><stop offset="0.070" stop-color="#939594"/><stop offset="0.076" stop-color="#949695"/><stop offset="0.080" stop-color="#949695"/><stop offset="0.100" stop-color="#969897"/><stop offset="0.120" stop-color="#989999"/><stop offset="0.150" stop-color="#9a9c9b"/><stop offset="0.200" stop-color="#9e9f9f"/><stop offset="0.210" stop-color="#9ea09f"/><stop offset="0.270" stop-color="#9fa1a0"/><stop offset="0.280" stop-color="#9fa1a0"/><stop offset="0.350" stop-color="#9fa0a0"/><stop offset="0.420" stop-color="#9ea09f"/><stop offset="0.490" stop-color="#9e9f9f"/><stop offset="0.550" stop-color="#999a9a"/><stop offset="0.600" stop-color="#949695"/><stop offset="0.650" stop-color="#8e908f"/><stop offset="0.700" stop-color="#848685"/><stop offset="0.740" stop-color="#7d7e7e"/><stop offset="0.790" stop-color="#737474"/><stop offset="0.820" stop-color="#6c6e6d"/><stop offset="0.857" stop-color="#646464"/><stop offset="0.886" stop-color="#5a5a5a"/><stop offset="0.900" stop-color="#555555"/><stop offset="0.915" stop-color="#4e4e4e"/><stop offset="0.922" stop-color="#4b4b4b"/><stop offset="0.925" stop-color="#494949"/><stop offset="0.927" stop-color="#484848"/><stop offset="0.930" stop-color="#474747"/><stop offset="0.940" stop-color="#404040"/><stop offset="0.950" stop-color="#3d3d3d"/><stop offset="0.955" stop-color="#3c3c3c"/><stop offset="0.960" stop-color="#3b3b3b"/><stop offset="0.965" stop-color="#3e3e3e"/><stop offset="0.975" stop-color="#444444"/><stop offset="0.985" stop-color="#474747"/><stop offset="0.990" stop-color="#484848"/><stop offset="1.000" stop-color="#3e3e3e"/></linearGradient><linearGradient id="g292"><stop offset="0.010" stop-color="#7c7d7d"/><stop offset="0.020" stop-color="#818282"/><stop offset="0.030" stop-color="#868787"/><stop offset="0.035" stop-color="#878988"/><stop offset="0.050" stop-color="#8d8e8e"/><stop offset="0.055" stop-color="#8f9090"/><stop offset="0.060" stop-color="#919292"/><stop offset="0.070" stop-color="#949595"/><stop offset="0.076" stop-color="#949695"/><stop offset="0.080" stop-color="#949695"/><stop offset="0.100" stop-color="#969897"/><stop offset="0.120" stop-color="#989999"/><stop offset="0.150" stop-color="#9a9c9b"/><stop offset="0.200" stop-color="#9e9f9f"/><stop offset="0.210" stop-color="#9ea09f"/><stop offset="0.270" stop-color="#9fa1a0"/><stop offset="0.280" stop-color="#9fa1a0"/><stop offset="0.350" stop-color="#9fa0a0"/><stop offset="0.420" stop-color="#9ea09f"/><stop offset="0.490" stop-color="#9e9f9f"/><stop offset="0.550" stop-color="#999a9a"/><stop offset="0.600" stop-color="#959696"/><stop offset="0.650" stop-color="#8e908f"/><stop offset="0.700" stop-color="#858686"/><stop offset="0.740" stop-color="#7d7f7e"/><stop offset="0.790" stop-color="#737574"/><stop offset="0.820" stop-color="#6c6e6d"/><stop offset="0.857" stop-color="#646464"/><stop offset="0.886" stop-color="#5a5a5a"/><stop offset="0.900" stop-color="#565656"/><stop offset="0.915" stop-color="#4e4e4e"/><stop offset="0.922" stop-color="#4b4b4b"/><stop offset="0.925" stop-color="#494949"/><stop offset="0.927" stop-color="#484848"/><stop offset="0.930" stop-color="#474747"/><stop offset="0.940" stop-color="#404040"/><stop offset="0.950" stop-color="#3d3d3d"/><stop offset="0.955" stop-color="#3c3c3c"/><stop offset="0.960" stop-color="#3c3c3c"/><stop offset="0.965" stop-color="#3e3e3e"/><stop offset="0.975" stop-color="#444444"/><stop offset="0.985" stop-color="#474747"/><stop offset="0.990" stop-color="#484848"/><stop offset="1.000" stop-color="#3e3e3e"/></linearGradient><linearGradient id="g296"><stop offset="0.010" stop-color="#7c7d7d"/><stop offset="0.020" stop-color="#818282"/><stop offset="0.030" stop-color="#868787"/><stop offset="0.035" stop-color="#878988"/><stop offset="0.050" stop-color="#8d8e8e"/><stop offset="0.055" stop-color="#8f9090"/><stop offset="0.060" stop-color="#919292"/><stop offset="0.070" stop-color="#949595"/><stop offset="0.076" stop-color="#949695"/><stop offset="0.080" stop-color="#959696"/><stop offset="0.100" stop-color="#969897"/><stop offset="0.120" stop-color="#989999"/><stop offset="0.150" stop-color="#9a9c9b"/><stop offset="0.200" stop-color="#9e9f9f"/><stop offset="0.210" stop-color="#9fa0a0"/><stop offset="0.270" stop-color="#9fa1a0"/><stop offset="0.280" stop-color="#9fa1a0"/><stop offset="0.350" stop-color="#9fa0a0"/><stop offset="0.420" stop-color="#9ea09f"/><stop offset="0.490" stop-color="#9ea09f"/><stop offset="0.550" stop-color="#999b9a"/><stop offset="0.600" stop-color="#959796"/><stop offset="0.650" stop-color="#8f9090"/><stop offset="0.700" stop-color="#858786"/><stop offset="0.740" stop-color="#7d7f7e"/><stop offset="0.790" stop-color="#737574"/><stop offset="0.820" stop-color="#6d6e6e"/><stop offset="0.857" stop-color="#646665"/><stop offset="0.886" stop-color="#5a5a5a"/><stop offset="0.900" stop-color="#565656"/><stop offset="0.915" stop-color="#4e4e4e"/><stop offset="0.922" stop-color="#4b4b4b"/><stop offset="0.925" stop-color="#4a4a4a"/><stop offset="0.927" stop-color="#494949"/><stop offset="0.930" stop-color="#474747"/><stop offset="0.940" stop-color="#404040"/><stop offset="0.950" stop-color="#3d3d3d"/><stop offset="0.955" stop-color="#3c3c3c"/><stop offset="0.960" stop-color="#3c3c3c"/><stop offset="0.965" stop-color="#3e3e3e"/><stop offset="0.975" stop-color="#444444"/><stop offset="0.985" stop-color="#474747"/><stop offset="0.990" stop-color="#484848"/><stop offset="1.000" stop-color="#3e3e3e"/></linearGradient><linearGradient id="g300"><stop offset="0.010" stop-color="#7c7d7d"/><stop offset="0.020" stop-color="#818282"/><stop offset="0.030" stop-color="#868787"/><stop offset="0.035" stop-color="#888989"/><stop offset="0.050" stop-color="#8d8e8e"/><stop offset="0.055" stop-color="#8f9090"/><stop offset="0.060" stop-color="#919292"/><stop offset="0.070" stop-color="#949595"/><stop offset="0.076" stop-color="#949695"/><stop offset="0.080" stop-color="#959696"/><stop offset="0.100" stop-color="#969897"/><stop offset="0.120" stop-color="#989999"/><stop offset="0.150" stop-color="#9a9c9b"/><stop offset="0.200" stop-color="#9e9f9f"/><stop offset="0.210" stop-color="#9fa0a0"/><stop offset="0.270" stop-color="#9fa1a0"/><stop offset="0.280" stop-color="#9fa1a0"/><stop offset="0.350" stop-color="#9fa0a0"/><stop offset="0.420" stop-color="#9fa0a0"/><stop offset="0.490" stop-color="#9ea09f"/><stop offset="0.550" stop-color="#9a9b9b"/><stop offset="0.600" stop-color="#969797"/><stop offset="0.650" stop-color="#8f9190"/><stop offset="0.700" stop-color="#858786"/><stop offset="0.740" stop-color="#7e7f7f"/><stop offset="0.790" stop-color="#747575"/><stop offset="0.820" stop-color="#6d6e6e"/><stop offset="0.857" stop-color="#646665"/><stop offset="0.886" stop-color="#5b5b5b"/><stop offset="0.900" stop-color="#565656"/><stop offset="0.915" stop-color="#4f4f4f"/><stop offset="0.922" stop-color="#4b4b4b"/><stop offset="0.925" stop-color="#4a4a4a"/><stop offset="0.927" stop-color="#494949"/><stop offset="0.930" stop-color="#474747"/><stop offset="0.940" stop-color="#414141"/><stop offset="0.950" stop-color="#3d3d3d"/><stop offset="0.955" stop-color="#3c3c3c"/><stop offset="0.960" stop-color="#3c3c3c"/><stop offset="0.965" stop-color="#3f3f3f"/><stop offset="0.975" stop-color="#444444"/><stop offset="0.985" stop-color="#474747"/><stop offset="0.990" stop-color="#484848"/><stop offset="1.000" stop-color="#3e3e3e"/></linearGradient><linearGradient id="g304"><stop offset="0.010" stop-color="#7c7d7d"/><stop offset="0.020" stop-color="#818282"/><stop offset="0.030" stop-color="#868787"/><stop offset="0.035" stop-color="#888989"/><stop offset="0.050" stop-color="#8d8e8e"/><stop offset="0.055" stop-color="#8f9090"/><stop offset="0.060" stop-color="#919292"/><stop offset="0.070" stop-color="#949595"/><stop offset="0.076" stop-color="#949695"/><stop offset="0.080" stop-color="#959696"/><stop offset="0.100" stop-color="#969897"/><stop offset="0.120" stop-color="#989999"/><stop offset="0.150" stop-color="#9a9c9b"/><stop offset="0.200" stop-color="#9ea09f"/><stop offset="0.210" stop-color="#9fa0a0"/><stop offset="0.270" stop-color="#9fa1a0"/><stop offset="0.280" stop-color="#9fa1a0"/><stop offset="0.350" stop-color="#9fa0a0"/><stop offset="0.420" stop-color="#9fa0a0"/><stop offset="0.490" stop-color="#9fa0a0"/><stop offset="0.550" stop-color="#9a9b9b"/><stop offset="0.600" stop-color="#969797"/><stop offset="0.650" stop-color="#909191"/><stop offset="0.700" stop-color="#868787"/><stop offset="0.740" stop-color="#7e7f7f"/><stop offset="0.790" stop-color="#747575"/><stop offset="0.820" stop-color="#6d6f6e"/><stop offset="0.857" stop-color="#646665"/><stop offset="0.886" stop-color="#5b5b5b"/><stop offset="0.900" stop-color="#565656"/><stop offset="0.915" stop-color="#4f4f4f"/><stop offset="0.922" stop-color="#4c4c4c"/><stop offset="0.925" stop-color="#4a4a4a"/><stop offset="0.927" stop-color="#494949"/><stop offset="0.930" stop-color="#484848"/><stop offset="0.940" stop-color="#414141"/><stop offset="0.950" stop-color="#3d3d3d"/><stop offset="0.955" stop-color="#3d3d3d"/><stop offset="0.960" stop-color="#3c3c3c"/><stop offset="0.965" stop-color="#3f3f3f"/><stop offset="0.975" stop-color="#444444"/><stop offset="0.985" stop-color="#474747"/><stop offset="0.990" stop-color="#484848"/><stop offset="1.000" stop-color="#3e3e3e"/></linearGradient><linearGradient id="g308"><stop offset="0.010" stop-color="#7c7e7d"/><stop offset="0.020" stop-color="#818282"/><stop offset="0.030" stop-color="#868887"/><stop offset="0.035" stop-color="#888989"/><stop offset="0.050" stop-color="#8d8e8e"/><stop offset="0.055" stop-color="#8f9090"/><stop offset="0.060" stop-color="#909292"/><stop offset="0.070" stop-color="#949695"/><stop offset="0.076" stop-color="#949695"/><stop offset="0.080" stop-color="#959696"/><stop offset="0.100" stop-color="#969897"/><stop offset="0.120" stop-color="#989999"/><stop offset="0.150" stop-color="#9a9c9b"/><stop offset="0.200" stop-color="#9ea09f"/><stop offset="0.210" stop-color="#9fa0a0"/><stop offset="0.270" stop-color="#9fa0a0"/><stop offset="0.280" stop-color="#9fa0a0"/><stop offset="0.350" stop-color="#9fa0a0"/><stop offset="0.420" stop-color="#9fa0a0"/><stop offset="0.490" stop-color="#9fa0a0"/><stop offset="0.550" stop-color="#9a9c9b"/><stop offset="0.600" stop-color="#969897"/><stop offset="0.650" stop-color="#909291"/><stop offset="0.700" stop-color="#868887"/><stop offset="0.740" stop-color="#7e807f"/><stop offset="0.790" stop-color="#747675"/><stop offset="0.820" stop-color="#6d6f6e"/><stop offset="0.857" stop-color="#656666"/><stop offset="0.886" stop-color="#5b5b5b"/><stop offset="0.900" stop-color="#565656"/><stop offset="0.915" stop-color="#4f4f4f"/><stop offset="0.922" stop-color="#4c4c4c"/><stop offset="0.925" stop-color="#4a4a4a"/><stop offset="0.927" stop-color="#494949"/><stop offset="0.930" stop-color="#484848"/><stop offset="0.940" stop-color="#414141"/><stop offset="0.950" stop-color="#3d3d3d"/><stop offset="0.955" stop-color="#3d3d3d"/><stop offset="0.960" stop-color="#3c3c3c"/><stop offset="0.965" stop-color="#3f3f3f"/><stop offset="0.975" stop-color="#444444"/><stop offset="0.985" stop-color="#474747"/><stop offset="0.990" stop-color="#484848"/><stop offset="1.000" stop-color="#3e3e3e"/></linearGradient><linearGradient id="g312"><stop offset="0.010" stop-color="#7c7e7d"/><stop offset="0.020" stop-color="#818282"/><stop offset="0.030" stop-color="#868887"/><stop offset="0.035" stop-color="#888989"/><stop offset="0.050" stop-color="#8d8e8e"/><stop offset="0.055" stop-color="#8f9090"/><stop offset="0.060" stop-color="#909292"/><stop offset="0.070" stop-color="#949695"/><stop offset="0.076" stop-color="#949695"/><stop offset="0.080" stop-color="#959696"/><stop offset="0.100" stop-color="#969897"/><stop offset="0.120" stop-color="#989999"/><stop offset="0.150" stop-color="#9a9c9b"/><stop offset="0.200" stop-color="#9ea09f"/><stop offset="0.210" stop-color="#9fa0a0"/><stop offset="0.270" stop-color="#9fa0a0"/><stop offset="0.280" stop-color="#9fa0a0"/><stop offset="0.350" stop-color="#9fa0a0"/><stop offset="0.420" stop-color="#9fa0a0"/><stop offset="0.490" stop-color="#9fa0a0"/><stop offset="0.550" stop-color="#9a9c9b"/><stop offset="0.600" stop-color="#969897"/><stop offset="0.650" stop-color="#909291"/><stop offset="0.700" stop-color="#868887"/><stop offset="0.740" stop-color="#7e807f"/><stop offset="0.790" stop-color="#747675"/><stop offset="0.820" stop-color="#6d6f6e"/><stop offset="0.857" stop-color="#656666"/><stop offset="0.886" stop-color="#5b5b5b"/><stop offset="0.900" stop-color="#565656"/><stop offset="0.915" stop-color="#4f4f4f"/><stop offset="0.922" stop-color="#4c4c4c"/><stop offset="0.925" stop-color="#4a4a4a"/><stop offset="0.927" stop-color="#494949"/><stop offset="0.930" stop-color="#484848"/><stop offset="0.940" stop-color="#414141"/><stop offset="0.950" stop-color="#3d3d3d"/><stop offset="0.955" stop-color="#3d3d3d"/><stop offset="0.960" stop-color="#3c3c3c"/><stop offset="0.965" stop-color="#3f3f3f"/><stop offset="0.975" stop-color="#444444"/><stop offset="0.985" stop-color="#474747"/><stop offset="0.990" stop-color="#484848"/><stop offset="1.000" stop-color="#3e3e3e"/></linearGradient><linearGradient id="g316"><stop offset="0.010" stop-color="#7c7e7d"/><stop offset="0.020" stop-color="#818282"/><stop offset="0.030" stop-color="#868887"/><stop offset="0.035" stop-color="#888989"/><stop offset="0.050" stop-color="#8d8e8e"/><stop offset="0.055" stop-color="#8f9090"/><stop offset="0.060" stop-color="#909292"/><stop offset="0.070" stop-color="#949695"/><stop offset="0.076" stop-color="#949695"/><stop offset="0.080" stop-color="#959696"/><stop offset="0.100" stop-color="#969897"/><stop offset="0.120" stop-color="#989999"/><stop offset="0.150" stop-color="#9a9c9b"/><stop offset="0.200" stop-color="#9ea09f"/><stop offset="0.210" stop-color="#9fa0a0"/><stop offset="0.270" stop-color="#9fa0a0"/><stop offset="0.280" stop-color="#9fa0a0"/><stop offset="0.350" stop-color="#9fa0a0"/><stop offset="0.420" stop-color="#9fa0a0"/><stop offset="0.490" stop-color="#9fa0a0"/><stop offset="0.550" stop-color="#9a9c9b"/><stop offset="0.600" stop-color="#969897"/><stop offset="0.650" stop-color="#909291"/><stop offset="0.700" stop-color="#868887"/><stop offset="0.740" stop-color="#7e807f"/><stop offset="0.790" stop-color="#747675"/><stop offset="0.820" stop-color="#6d6f6e"/><stop offset="0.857" stop-color="#656666"/><stop offset="0.886" stop-color="#5b5b5b"/><stop offset="0.900" stop-color="#565656"/><stop offset="0.915" stop-color="#4f4f4f"/><stop offset="0.922" stop-color="#4c4c4c"/><stop offset="0.925" stop-color="#4a4a4a"/><stop offset="0.927" stop-color="#494949"/><stop offset="0.930" stop-color="#484848"/><stop offset="0.940" stop-color="#414141"/><stop offset="0.950" stop-color="#3d3d3d"/><stop offset="0.955" stop-color="#3d3d3d"/><stop offset="0.960" stop-color="#3c3c3c"/><stop offset="0.965" stop-color="#3f3f3f"/><stop offset="0.975" stop-color="#444444"/><stop offset="0.985" stop-color="#474747"/><stop offset="0.990" stop-color="#484848"/><stop offset="1.000" stop-color="#3e3e3e"/></linearGradient><linearGradient id="g320"><stop offset="0.010" stop-color="#7c7e7d"/><stop offset="0.020" stop-color="#818282"/><stop offset="0.030" stop-color="#868887"/><stop offset="0.035" stop-color="#888989"/><stop offset="0.050" stop-color="#8d8e8e"/><stop offset="0.055" stop-color="#8f9090"/><stop offset="0.060" stop-color="#909292"/><stop offset="0.070" stop-color="#949695"/><stop offset="0.076" stop-color="#949695"/><stop offset="0.080" stop-color="#959696"/><stop offset="0.100" stop-color="#969897"/><stop offset="0.120" stop-color="#989999"/><stop offset="0.150" stop-color="#9a9c9b"/><stop offset="0.200" stop-color="#9ea09f"/><stop offset="0.210" stop-color="#9fa0a0"/><stop offset="0.270" stop-color="#9fa0a0"/><stop offset="0.280" stop-color="#9fa0a0"/><stop offset="0.350" stop-color="#9fa0a0"/><stop offset="0.420" stop-color="#9fa0a0"/><stop offset="0.490" stop-color="#9fa0a0"/><stop offset="0.550" stop-color="#9a9c9b"/><stop offset="0.600" stop-color="#969897"/><stop offset="0.650" stop-color="#909291"/><stop offset="0.700" stop-color="#868887"/><stop offset="0.740" stop-color="#7e807f"/><stop offset="0.790" stop-color="#747675"/><stop offset="0.820" stop-color="#6d6f6e"/><stop offset="0.857" stop-color="#656666"/><stop offset="0.886" stop-color="#5b5b5b"/><stop offset="0.900" stop-color="#565656"/><stop offset="0.915" stop-color="#4f4f4f"/><stop offset="0.922" stop-color="#4c4c4c"/><stop offset="0.925" stop-color="#4a4a4a"/><stop offset="0.927" stop-color="#494949"/><stop offset="0.930" stop-color="#484848"/><stop offset="0.940" stop-color="#414141"/><stop offset="0.950" stop-color="#3d3d3d"/><stop offset="0.955" stop-color="#3d3d3d"/><stop offset="0.960" stop-color="#3c3c3c"/><stop offset="0.965" stop-color="#3f3f3f"/><stop offset="0.975" stop-color="#444444"/><stop offset="0.985" stop-color="#474747"/><stop offset="0.990" stop-color="#484848"/><stop offset="1.000" stop-color="#3e3e3e"/></linearGradient><linearGradient id="g324"><stop offset="0.010" stop-color="#7c7e7d"/><stop offset="0.020" stop-color="#818282"/><stop offset="0.030" stop-color="#868887"/><stop offset="0.035" stop-color="#888989"/><stop offset="0.050" stop-color="#8d8e8e"/><stop offset="0.055" stop-color="#8f9090"/><stop offset="0.060" stop-color="#909292"/><stop offset="0.070" stop-color="#949695"/><stop offset="0.076" stop-color="#949695"/><stop offset="0.080" stop-color="#959696"/><stop offset="0.100" stop-color="#969897"/><stop offset="0.120" stop-color="#989999"/><stop offset="0.150" stop-color="#9a9c9b"/><stop offset="0.200" stop-color="#9ea09f"/><stop offset="0.210" stop-color="#9fa0a0"/><stop offset="0.270" stop-color="#9fa0a0"/><stop offset="0.280" stop-color="#9fa0a0"/><stop offset="0.350" stop-color="#9fa0a0"/><stop offset="0.420" stop-color="#9fa0a0"/><stop offset="0.490" stop-color="#9fa0a0"/><stop offset="0.550" stop-color="#9a9c9b"/><stop offset="0.600" stop-color="#969897"/><stop offset="0.650" stop-color="#909291"/><stop offset="0.700" stop-color="#868887"/><stop offset="0.740" stop-color="#7e807f"/><stop offset="0.790" stop-color="#747675"/><stop offset="0.820" stop-color="#6d6f6e"/><stop offset="0.857" stop-color="#656666"/><stop offset="0.886" stop-color="#5b5b5b"/><stop offset="0.900" stop-color="#565656"/><stop offset="0.915" stop-color="#4f4f4f"/><stop offset="0.922" stop-color="#4c4c4c"/><stop offset="0.925" stop-color="#4a4a4a"/><stop offset="0.927" stop-color="#494949"/><stop offset="0.930" stop-color="#484848"/><stop offset="0.940" stop-color="#414141"/><stop offset="0.950" stop-color="#3d3d3d"/><stop offset="0.955" stop-color="#3d3d3d"/><stop offset="0.960" stop-color="#3c3c3c"/><stop offset="0.965" stop-color="#3f3f3f"/><stop offset="0.975" stop-color="#444444"/><stop offset="0.985" stop-color="#474747"/><stop offset="0.990" stop-color="#484848"/><stop offset="1.000" stop-color="#3e3e3e"/></linearGradient><linearGradient id="g328"><stop offset="0.010" stop-color="#7c7e7d"/><stop offset="0.020" stop-color="#818282"/><stop offset="0.030" stop-color="#868887"/><stop offset="0.035" stop-color="#888989"/><stop offset="0.050" stop-color="#8d8e8e"/><stop offset="0.055" stop-color="#8f9090"/><stop offset="0.060" stop-color="#909292"/><stop offset="0.070" stop-color="#949695"/><stop offset="0.076" stop-color="#949695"/><stop offset="0.080" stop-color="#959696"/><stop offset="0.100" stop-color="#969897"/><stop offset="0.120" stop-color="#989999"/><stop offset="0.150" stop-color="#9a9c9b"/><stop offset="0.200" stop-color="#9ea09f"/><stop offset="0.210" stop-color="#9fa0a0"/><stop offset="0.270" stop-color="#9fa0a0"/><stop offset="0.280" stop-color="#9fa0a0"/><stop offset="0.350" stop-color="#9fa0a0"/><stop offset="0.420" stop-color="#9fa0a0"/><stop offset="0.490" stop-color="#9fa0a0"/><stop offset="0.550" stop-color="#9a9c9b"/><stop offset="0.600" stop-color="#969897"/><stop offset="0.650" stop-color="#909291"/><stop offset="0.700" stop-color="#868887"/><stop offset="0.740" stop-color="#7e807f"/><stop offset="0.790" stop-color="#747675"/><stop offset="0.820" stop-color="#6d6f6e"/><stop offset="0.857" stop-color="#656666"/><stop offset="0.886" stop-color="#5b5b5b"/><stop offset="0.900" stop-color="#565656"/><stop offset="0.915" stop-color="#4f4f4f"/><stop offset="0.922" stop-color="#4c4c4c"/><stop offset="0.925" stop-color="#4a4a4a"/><stop offset="0.927" stop-color="#494949"/><stop offset="0.930" stop-color="#484848"/><stop offset="0.940" stop-color="#414141"/><stop offset="0.950" stop-color="#3d3d3d"/><stop offset="0.955" stop-color="#3d3d3d"/><stop offset="0.960" stop-color="#3c3c3c"/><stop offset="0.965" stop-color="#3f3f3f"/><stop offset="0.975" stop-color="#444444"/><stop offset="0.985" stop-color="#474747"/><stop offset="0.990" stop-color="#484848"/><stop offset="1.000" stop-color="#3e3e3e"/></linearGradient></defs>
<g fill="url(#g136)"><rect x="204.28" y="136" width="194.24" height="1"/><rect x="204.45" y="137" width="193.91" height="1"/><rect x="204.61" y="138" width="193.59" height="1"/><rect x="204.77" y="139" width="193.27" height="1"/></g><g fill="url(#g140)"><rect x="204.94" y="140" width="192.94" height="1"/><rect x="205.10" y="141" width="192.62" height="1"/><rect x="205.27" y="142" width="192.29" height="1"/><rect x="205.43" y="143" width="191.97" height="1"/></g><g fill="url(#g144)"><rect x="205.59" y="144" width="191.65" height="1"/><rect x="205.76" y="145" width="191.32" height="1"/><rect x="205.92" y="146" width="191.00" height="1"/><rect x="206.09" y="147" width="190.67" height="1"/></g><g fill="url(#g148)"><rect x="206.25" y="148" width="190.35" height="1"/><rect x="206.41" y="149" width="190.03" height="1"/><rect x="206.58" y="150" width="189.70" height="1"/><rect x="206.74" y="151" width="189.38" height="1"/></g><g fill="url(#g152)"><rect x="206.91" y="152" width="189.05" height="1"/><rect x="207.07" y="153" width="188.73" height="1"/><rect x="207.23" y="154" width="188.41" height="1"/><rect x="207.40" y="155" width="188.08" height="1"/></g><g fill="url(#g156)"><rect x="207.56" y="156" width="187.76" height="1"/><rect x="207.73" y="157" width="187.43" height="1"/><rect x="207.89" y="158" width="187.11" height="1"/><rect x="208.05" y="159" width="186.79" height="1"/></g><g fill="url(#g160)"><rect x="208.22" y="160" width="186.46" height="1"/><rect x="208.38" y="161" width="186.14" height="1"/><rect x="208.55" y="162" width="185.81" height="1"/><rect x="208.71" y="163" width="185.49" height="1"/></g><g fill="url(#g164)"><rect x="208.87" y="164" width="185.17" height="1"/><rect x="209.04" y="165" width="184.84" height="1"/><rect x="209.20" y="166" width="184.52" height="1"/><rect x="209.37" y="167" width="184.19" height="1"/></g><g fill="url(#g168)"><rect x="209.53" y="168" width="183.87" height="1"/><rect x="209.69" y="169" width="183.55" height="1"/><rect x="209.86" y="170" width="183.22" height="1"/><rect x="210.02" y="171" width="182.90" height="1"/></g><g fill="url(#g172)"><rect x="210.19" y="172" width="182.57" height="1"/><rect x="210.35" y="173" width="182.25" height="1"/><rect x="210.51" y="174" width="181.93" height="1"/><rect x="210.68" y="175" width="181.60" height="1"/></g><g fill="url(#g176)"><rect x="210.84" y="176" width="181.28" height="1"/><rect x="211.01" y="177" width="180.95" height="1"/><rect x="211.17" y="178" width="180.63" height="1"/><rect x="211.33" y="179" width="180.31" height="1"/></g><g fill="url(#g180)"><rect x="211.50" y="180" width="179.98" height="1"/><rect x="211.66" y="181" width="179.66" height="1"/><rect x="211.83" y="182" width="179.33" height="1"/><rect x="211.99" y="183" width="179.01" height="1"/></g><g fill="url(#g184)"><rect x="212.15" y="184" width="178.69" height="1"/><rect x="212.32" y="185" width="178.36" height="1"/><rect x="212.48" y="186" width="178.04" height="1"/><rect x="212.65" y="187" width="177.71" height="1"/></g><g fill="url(#g188)"><rect x="212.81" y="188" width="177.39" height="1"/><rect x="212.97" y="189" width="177.07" height="1"/><rect x="213.14" y="190" width="176.74" height="1"/><rect x="213.30" y="191" width="176.42" height="1"/></g><g fill="url(#g192)"><rect x="213.47" y="192" width="176.09" height="1"/><rect x="213.63" y="193" width="175.77" height="1"/><rect x="213.79" y="194" width="175.45" height="1"/><rect x="213.96" y="195" width="175.12" height="1"/></g><g fill="url(#g196)"><rect x="214.12" y="196" width="174.80" height="1"/><rect x="214.29" y="197" width="174.47" height="1"/><rect x="214.45" y="198" width="174.15" height="1"/><rect x="214.61" y="199" width="173.83" height="1"/></g><g fill="url(#g200)"><rect x="214.78" y="200" width="173.50" height="1"/><rect x="214.94" y="201" width="173.18" height="1"/><rect x="215.11" y="202" width="172.85" height="1"/><rect x="215.27" y="203" width="172.53" height="1"/></g><g fill="url(#g204)"><rect x="215.43" y="204" width="172.21" height="1"/><rect x="215.60" y="205" width="171.88" height="1"/><rect x="215.76" y="206" width="171.56" height="1"/><rect x="215.93" y="207" width="171.23" height="1"/></g><g fill="url(#g208)"><rect x="216.09" y="208" width="170.91" height="1"/><rect x="216.25" y="209" width="170.59" height="1"/><rect x="216.42" y="210" width="170.26" height="1"/><rect x="216.58" y="211" width="169.94" height="1"/></g><g fill="url(#g212)"><rect x="216.75" y="212" width="169.61" height="1"/><rect x="216.91" y="213" width="169.29" height="1"/><rect x="217.07" y="214" width="168.97" height="1"/><rect x="217.24" y="215" width="168.64" height="1"/></g><g fill="url(#g216)"><rect x="217.40" y="216" width="168.32" height="1"/><rect x="217.57" y="217" width="167.99" height="1"/><rect x="217.73" y="218" width="167.67" height="1"/><rect x="217.89" y="219" width="167.35" height="1"/></g><g fill="url(#g220)"><rect x="218.06" y="220" width="167.02" height="1"/><rect x="218.22" y="221" width="166.70" height="1"/><rect x="218.39" y="222" width="166.37" height="1"/><rect x="218.55" y="223" width="166.05" height="1"/></g><g fill="url(#g224)"><rect x="218.71" y="224" width="165.73" height="1"/><rect x="218.88" y="225" width="165.40" height="1"/><rect x="219.04" y="226" width="165.08" height="1"/><rect x="219.21" y="227" width="164.75" height="1"/></g><g fill="url(#g228)"><rect x="219.37" y="228" width="164.43" height="1"/><rect x="219.53" y="229" width="164.11" height="1"/><rect x="219.70" y="230" width="163.78" height="1"/><rect x="219.86" y="231" width="163.46" height="1"/></g><g fill="url(#g232)"><rect x="220.03" y="232" width="163.13" height="1"/><rect x="220.19" y="233" width="162.81" height="1"/><rect x="220.35" y="234" width="162.49" height="1"/><rect x="220.52" y="235" width="162.16" height="1"/></g><g fill="url(#g236)"><rect x="220.68" y="236" width="161.84" height="1"/><rect x="220.85" y="237" width="161.51" height="1"/><rect x="221.01" y="238" width="161.19" height="1"/><rect x="221.17" y="239" width="160.87" height="1"/></g><g fill="url(#g240)"><rect x="221.34" y="240" width="160.54" height="1"/><rect x="221.50" y="241" width="160.22" height="1"/><rect x="221.67" y="242" width="159.89" height="1"/><rect x="221.83" y="243" width="159.57" height="1"/></g><g fill="url(#g244)"><rect x="221.99" y="244" width="159.25" height="1"/><rect x="222.16" y="245" width="158.92" height="1"/><rect x="222.32" y="246" width="158.60" height="1"/><rect x="222.49" y="247" width="158.27" height="1"/></g><g fill="url(#g248)"><rect x="222.65" y="248" width="157.95" height="1"/><rect x="222.81" y="249" width="157.63" height="1"/><rect x="222.98" y="250" width="157.30" height="1"/><rect x="223.14" y="251" width="156.98" height="1"/></g><g fill="url(#g252)"><rect x="223.31" y="252" width="156.65" height="1"/><rect x="223.47" y="253" width="156.33" height="1"/><rect x="223.63" y="254" width="156.01" height="1"/><rect x="223.80" y="255" width="155.68" height="1"/></g><g fill="url(#g256)"><rect x="223.96" y="256" width="155.36" height="1"/><rect x="224.13" y="257" width="155.03" height="1"/><rect x="224.29" y="258" width="154.71" height="1"/><rect x="224.45" y="259" width="154.39" height="1"/></g><g fill="url(#g260)"><rect x="224.62" y="260" width="154.06" height="1"/><rect x="224.78" y="261" width="153.74" height="1"/><rect x="224.95" y="262" width="153.41" height="1"/><rect x="225.11" y="263" width="153.09" height="1"/></g><g fill="url(#g264)"><rect x="225.27" y="264" width="152.77" height="1"/><rect x="225.44" y="265" width="152.44" height="1"/><rect x="225.60" y="266" width="152.12" height="1"/><rect x="225.77" y="267" width="151.79" height="1"/></g><g fill="url(#g268)"><rect x="225.93" y="268" width="151.47" height="1"/><rect x="226.09" y="269" width="151.15" height="1"/><rect x="226.26" y="270" width="150.82" height="1"/><rect x="226.42" y="271" width="150.50" height="1"/></g><g fill="url(#g272)"><rect x="226.59" y="272" width="150.17" height="1"/><rect x="226.75" y="273" width="149.85" height="1"/><rect x="226.91" y="274" width="149.53" height="1"/><rect x="227.08" y="275" width="149.20" height="1"/></g><g fill="url(#g276)"><rect x="227.24" y="276" width="148.88" height="1"/><rect x="227.41" y="277" width="148.55" height="1"/><rect x="227.57" y="278" width="148.23" height="1"/><rect x="227.73" y="279" width="147.91" height="1"/></g><g fill="url(#g280)"><rect x="227.90" y="280" width="147.58" height="1"/><rect x="228.06" y="281" width="147.26" height="1"/><rect x="228.23" y="282" width="146.93" height="1"/><rect x="228.39" y="283" width="146.61" height="1"/></g><g fill="url(#g284)"><rect x="228.55" y="284" width="146.29" height="1"/><rect x="228.72" y="285" width="145.96" height="1"/><rect x="228.88" y="286" width="145.64" height="1"/><rect x="229.05" y="287" width="145.31" height="1"/></g><g fill="url(#g288)"><rect x="229.21" y="288" width="144.99" height="1"/><rect x="229.37" y="289" width="144.67" height="1"/><rect x="229.54" y="290" width="144.34" height="1"/><rect x="229.70" y="291" width="144.02" height="1"/></g><g fill="url(#g292)"><rect x="229.87" y="292" width="143.69" height="1"/><rect x="230.03" y="293" width="143.37" height="1"/><rect x="230.19" y="294" width="143.05" height="1"/><rect x="230.36" y="295" width="142.72" height="1"/></g><g fill="url(#g296)"><rect x="230.52" y="296" width="142.40" height="1"/><rect x="230.69" y="297" width="142.07" height="1"/><rect x="230.85" y="298" width="141.75" height="1"/><rect x="231.01" y="299" width="141.43" height="1"/></g><g fill="url(#g300)"><rect x="231.18" y="300" width="141.10" height="1"/><rect x="231.34" y="301" width="140.78" height="1"/><rect x="231.51" y="302" width="140.45" height="1"/><rect x="231.67" y="303" width="140.13" height="1"/></g><g fill="url(#g304)"><rect x="231.83" y="304" width="139.81" height="1"/><rect x="232.00" y="305" width="139.48" height="1"/><rect x="232.16" y="306" width="139.16" height="1"/><rect x="232.33" y="307" width="138.83" height="1"/></g><g fill="url(#g308)"><rect x="232.49" y="308" width="138.51" height="1"/><rect x="232.65" y="309" width="138.19" height="1"/><rect x="232.82" y="310" width="137.86" height="1"/><rect x="232.98" y="311" width="137.54" height="1"/></g><g fill="url(#g312)"><rect x="233.15" y="312" width="137.21" height="1"/><rect x="233.31" y="313" width="136.89" height="1"/><rect x="233.47" y="314" width="136.57" height="1"/><rect x="233.64" y="315" width="136.24" height="1"/></g><g fill="url(#g316)"><rect x="233.80" y="316" width="135.92" height="1"/><rect x="233.97" y="317" width="135.59" height="1"/><rect x="234.13" y="318" width="135.27" height="1"/><rect x="234.29" y="319" width="134.95" height="1"/></g><g fill="url(#g320)"><rect x="234.46" y="320" width="134.62" height="1"/><rect x="234.62" y="321" width="134.30" height="1"/><rect x="234.79" y="322" width="133.97" height="1"/><rect x="234.95" y="323" width="133.65" height="1"/></g><g fill="url(#g324)"><rect x="235.11" y="324" width="133.33" height="1"/><rect x="235.28" y="325" width="133.00" height="1"/><rect x="235.44" y="326" width="132.68" height="1"/><rect x="235.61" y="327" width="132.35" height="1"/></g><g fill="url(#g328)"><rect x="235.77" y="328" width="132.03" height="1"/></g>
<rect x="204.20" y="136" width="180.40" height="1" fill="#fff" fill-opacity="0.04"/>
<rect x="204.36" y="137" width="180.08" height="1" fill="#000" fill-opacity="0.07"/>
<defs><linearGradient id="hl"><stop offset="0" stop-color="#fff" stop-opacity="0.14"/><stop offset="0.8" stop-color="#fff" stop-opacity="0.15"/><stop offset="0.9" stop-color="#fff" stop-opacity="0.1"/><stop offset="0.95" stop-color="#fff" stop-opacity="0.05"/><stop offset="1" stop-color="#fff" stop-opacity="0.04"/></linearGradient><linearGradient id="sh"><stop offset="0" stop-color="#000" stop-opacity="0.26"/><stop offset="0.85" stop-color="#000" stop-opacity="0.26"/><stop offset="1" stop-color="#000" stop-opacity="0.14"/></linearGradient></defs>
<rect x="209.90" y="176.60" width="179.76" height="3" fill="url(#hl)"/>
<rect x="211.10" y="179.90" width="179.26" height="1.8" fill="url(#sh)"/>
<rect x="212.30" y="191.20" width="175.03" height="3" fill="url(#hl)"/>
<rect x="213.50" y="194.40" width="174.53" height="1.8" fill="url(#sh)"/>
<rect x="214.66" y="205.60" width="170.36" height="3" fill="url(#hl)"/>
<rect x="215.86" y="209.20" width="169.86" height="1.8" fill="url(#sh)"/>
<rect x="235.20" y="325" width="133.16" height="1" fill="#000" fill-opacity="0.04"/>
<rect x="235.52" y="326" width="132.52" height="3" fill="#ffffff" fill-opacity="0.1"/>
<polyline points="226.6,269.1 223.2,273.3 214.4,289.9 209.1,307.3 207.0,325.6" fill="none" stroke="#fd8a0e" stroke-width="1.1"/>
<rect x="221.00" y="271.10" width="4.4" height="4.4" rx="1.3" fill="#fd8a0e"/>
<rect x="212.20" y="287.70" width="4.4" height="4.4" rx="1.3" fill="#fd8a0e"/>
<rect x="206.90" y="305.10" width="4.4" height="4.4" rx="1.3" fill="#fd8a0e"/>
<rect x="204.80" y="323.40" width="4.4" height="4.4" rx="1.3" fill="#fd8a0e"/>
<polyline points="376.3,269.1 379.7,273.3 388.5,289.9 393.8,307.3 395.9,325.6" fill="none" stroke="#fd8a0e" stroke-width="1.1"/>
<rect x="377.52" y="271.10" width="4.4" height="4.4" rx="1.3" fill="#fd8a0e"/>
<rect x="386.32" y="287.70" width="4.4" height="4.4" rx="1.3" fill="#fd8a0e"/>
<rect x="391.62" y="305.10" width="4.4" height="4.4" rx="1.3" fill="#fd8a0e"/>
<rect x="393.72" y="323.40" width="4.4" height="4.4" rx="1.3" fill="#fd8a0e"/>
<path d="M203.60 136L235.09 328" stroke="#262626" stroke-opacity="0.45" stroke-width="1" fill="none"/>
<path d="M202.7 127.2L203.4 139L205 146" stroke="#2e2e2e" stroke-width="1.6" fill="none"/>
<path d="M202.7 128L203.4 139L204.6 145" stroke="#626262" stroke-width="0.6" fill="none"/>
<path d="M399.6 127.5L399.6 139.5" stroke="#2c2c2c" stroke-width="1.4" fill="none" stroke-linecap="round"/>
<path d="M399.2 139.5L396 146.5L391.6 166" stroke="#333" stroke-width="1.1" fill="none"/>
<path d="M396 146.5L391.6 166" stroke="#7a7a7a" stroke-width="0.6" fill="none" stroke-dasharray="1 1.6"/>
<rect x="384.60" y="136" width="14" height="1" fill="#fff" fill-opacity="0.06"/>
<path d="M301.5 303.4V322.4M301.5 334.4V354.4" stroke="#000" stroke-width="1.2"/>
<rect x="276.00" y="328" width="19.5" height="1" fill="#000" fill-opacity="0.55"/>
<rect x="306.00" y="328" width="21" height="1" fill="#000" fill-opacity="0.55"/>
<path d="M301.50 316.10A12.3 12.3 0 0 1 306.21 317.04" stroke="#ff2020" stroke-width="1.3" fill="none"/><path d="M306.21 317.04A12.3 12.3 0 0 1 310.20 319.70" stroke="#ffffff" stroke-width="1.3" fill="none"/><path d="M310.20 319.70A12.3 12.3 0 0 1 312.86 323.69" stroke="#ff2020" stroke-width="1.3" fill="none"/><path d="M312.86 323.69A12.3 12.3 0 0 1 313.80 328.40" stroke="#ffffff" stroke-width="1.3" fill="none"/><path d="M313.80 328.40A12.3 12.3 0 0 1 312.86 333.11" stroke="#ff2020" stroke-width="1.3" fill="none"/><path d="M312.86 333.11A12.3 12.3 0 0 1 310.20 337.10" stroke="#ffffff" stroke-width="1.3" fill="none"/><path d="M310.20 337.10A12.3 12.3 0 0 1 306.21 339.76" stroke="#ff2020" stroke-width="1.3" fill="none"/><path d="M306.21 339.76A12.3 12.3 0 0 1 301.50 340.70" stroke="#ffffff" stroke-width="1.3" fill="none"/><path d="M301.50 340.70A12.3 12.3 0 0 1 296.79 339.76" stroke="#ff2020" stroke-width="1.3" fill="none"/><path d="M296.79 339.76A12.3 12.3 0 0 1 292.80 337.10" stroke="#ffffff" stroke-width="1.3" fill="none"/><path d="M292.80 337.10A12.3 12.3 0 0 1 290.14 333.11" stroke="#ff2020" stroke-width="1.3" fill="none"/><path d="M290.14 333.11A12.3 12.3 0 0 1 289.20 328.40" stroke="#ffffff" stroke-width="1.3" fill="none"/><path d="M289.20 328.40A12.3 12.3 0 0 1 290.14 323.69" stroke="#ff2020" stroke-width="1.3" fill="none"/><path d="M290.14 323.69A12.3 12.3 0 0 1 292.80 319.70" stroke="#ffffff" stroke-width="1.3" fill="none"/><path d="M292.80 319.70A12.3 12.3 0 0 1 296.79 317.04" stroke="#ff2020" stroke-width="1.3" fill="none"/><path d="M296.79 317.04A12.3 12.3 0 0 1 301.50 316.10" stroke="#ffffff" stroke-width="1.3" fill="none"/>
<circle cx="301.5" cy="328.4" r="2.7" fill="#f49a22" stroke="#1a1a1a" stroke-width="1"/>
</svg></body></html>
